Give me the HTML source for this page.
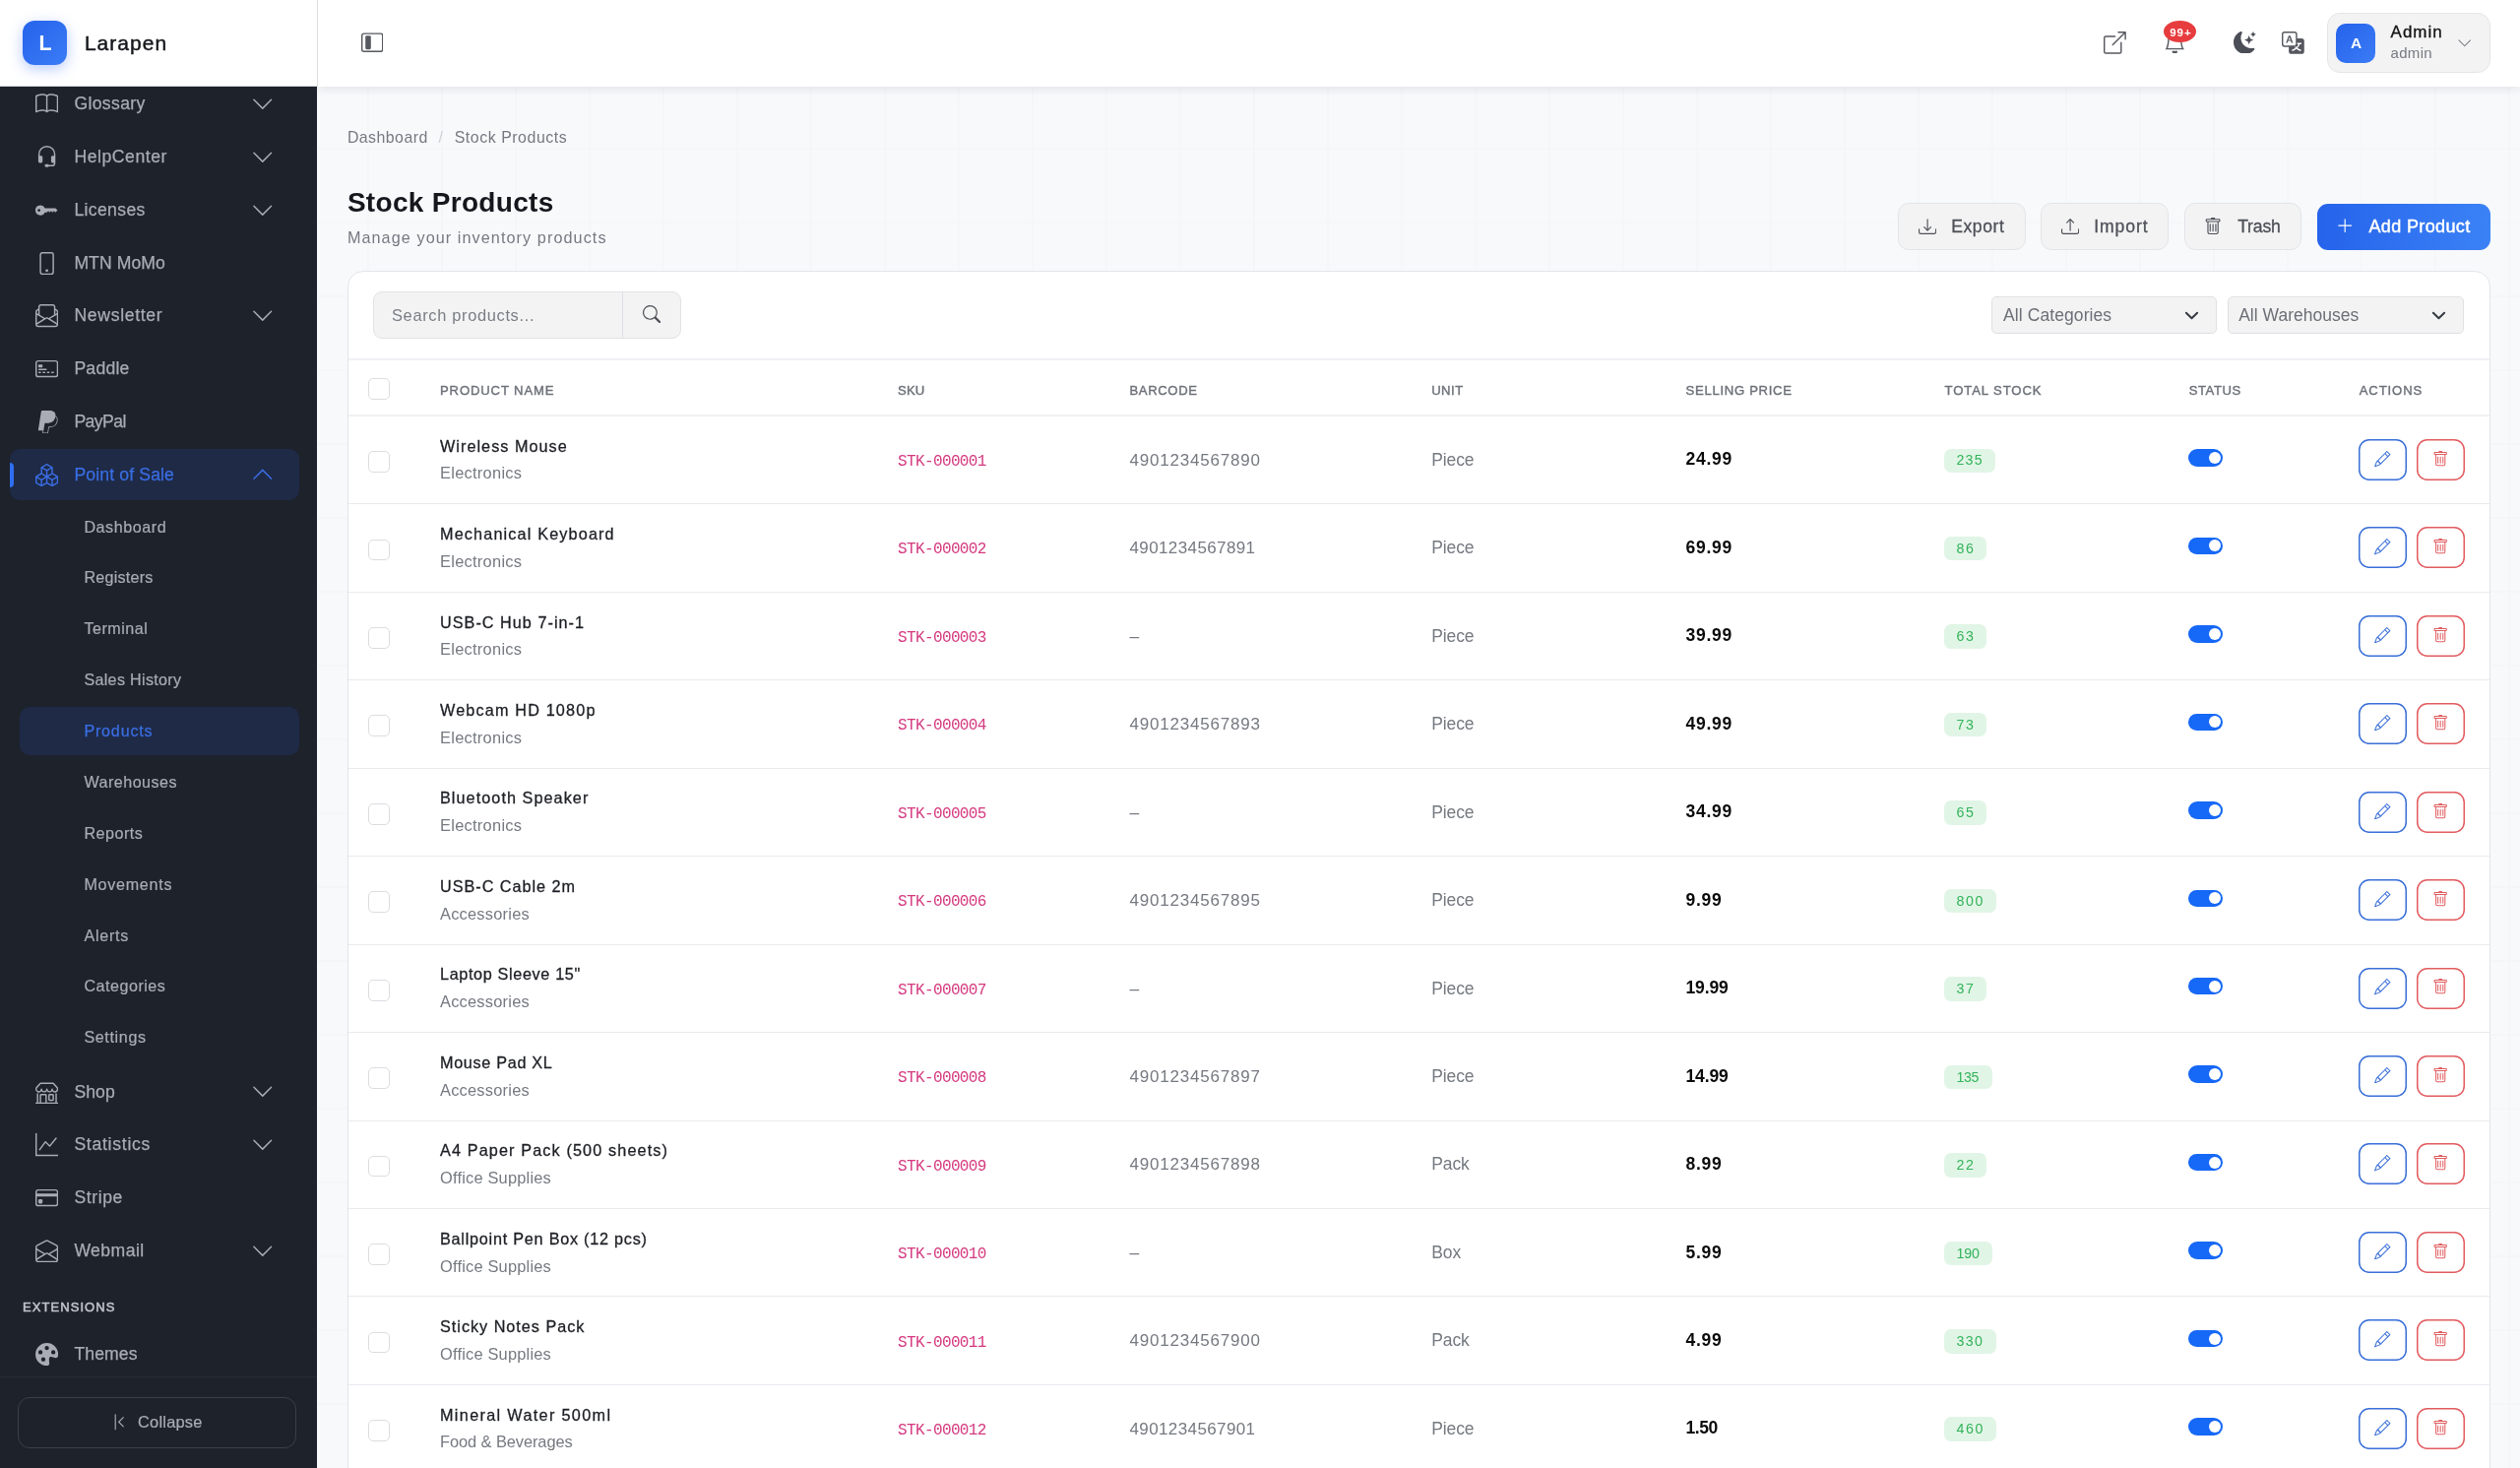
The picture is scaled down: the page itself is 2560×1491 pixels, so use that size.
<!DOCTYPE html>
<html lang="en"><head><meta charset="utf-8"><title>Stock Products</title><style>
html,body{margin:0;padding:0;}
body{width:2560px;height:1491px;overflow:hidden;position:relative;font-family:"Liberation Sans", sans-serif;
background-color:#f8f9fb;
background-image:linear-gradient(to right,#f5f6f8 2px,transparent 2px),linear-gradient(to bottom,#f5f6f8 2px,transparent 2px);
background-size:75px 75px;background-position:-2px 0px;}
#root{position:absolute;left:0;top:0;width:2560px;height:1491px;overflow:hidden;will-change:transform;}
.a{position:absolute;display:block;}
.t{position:absolute;white-space:pre;line-height:1;display:block;}
</style></head><body><div id="root">
<div class="a" style="left:322.00px;top:0.00px;width:2238.00px;height:88.00px;background:#fff;box-shadow:0 2px 10px rgba(20,30,50,.10);border-left:1px solid #dcdee2;box-sizing:border-box;"></div>
<div class="a" style="left:0.00px;top:88.00px;width:322.00px;height:1403.00px;background:#1e222b;"></div>
<div class="a" style="left:0.00px;top:0.00px;width:322.00px;height:88.00px;background:#fff;border-bottom:1px solid #d4d6da;box-sizing:border-box;"></div>
<div class="a" style="left:22.50px;top:20.50px;width:45.00px;height:45.00px;border-radius:12px;background:linear-gradient(135deg,#2563eb,#3b7cf6);box-shadow:0 4px 14px rgba(59,110,246,.35);"></div>
<span class="t" style="left:39.60px;top:34.10px;font-size:21.5px;color:#fff;font-weight:700;letter-spacing:0.000px;">L</span>
<span class="t" style="left:85.90px;top:33.10px;font-size:21px;color:#15171c;font-weight:400;letter-spacing:1.037px;-webkit-text-stroke:0.45px #15171c;">Larapen</span>
<svg class="a" style="left:35.80px;top:94.30px;width:23.2px;height:23.2px;fill:#a9acb4;" viewBox="0 0 16 16"><path d="M1 2.828c.885-.37 2.154-.769 3.388-.893 1.33-.134 2.458.063 3.112.752v9.746c-.935-.53-2.12-.603-3.213-.493-1.18.12-2.37.461-3.287.811V2.828zm7.5-.141c.654-.689 1.782-.886 3.112-.752 1.234.124 2.503.523 3.388.893v9.923c-.918-.35-2.107-.692-3.287-.81-1.094-.111-2.278-.039-3.213.492V2.687zM8 1.783C7.015.936 5.587.81 4.287.94c-1.514.153-3.042.672-3.994 1.105A.5.5 0 0 0 0 2.5v11a.5.5 0 0 0 .707.455c.882-.4 2.303-.881 3.68-1.02 1.409-.142 2.59.087 3.223.877a.5.5 0 0 0 .78 0c.633-.79 1.814-1.019 3.222-.877 1.378.139 2.8.62 3.681 1.02A.5.5 0 0 0 16 13.5v-11a.5.5 0 0 0-.293-.455c-.952-.433-2.48-.952-3.994-1.105C10.413.809 8.985.936 8 1.783z"/></svg>
<span class="t" style="left:75.40px;top:97.10px;font-size:17.6px;color:#a9acb4;font-weight:400;letter-spacing:0.368px;-webkit-text-stroke:0.25px #a9acb4;">Glossary</span>
<svg class="a" style="left:254.70px;top:94.15px;width:23.5px;height:23.5px;fill:#a9acb4;" viewBox="0 0 16 16"><path fill-rule="evenodd" d="M1.646 4.646a.5.5 0 0 1 .708 0L8 10.293l5.646-5.647a.5.5 0 0 1 .708.708l-6 6a.5.5 0 0 1-.708 0l-6-6a.5.5 0 0 1 0-.708z"/></svg>
<svg class="a" style="left:35.80px;top:148.06px;width:23.2px;height:23.2px;fill:#a9acb4;" viewBox="0 0 16 16"><path d="M8 1a5 5 0 0 0-5 5v1h1a1 1 0 0 1 1 1v3a1 1 0 0 1-1 1H3a1 1 0 0 1-1-1V6a6 6 0 1 1 12 0v6a2.5 2.5 0 0 1-2.5 2.5H9.366a1 1 0 0 1-.866.5h-1a1 1 0 1 1 0-2h1a1 1 0 0 1 .866.5H11.5A1.5 1.5 0 0 0 13 12h-1a1 1 0 0 1-1-1V8a1 1 0 0 1 1-1h1V6a5 5 0 0 0-5-5z"/></svg>
<span class="t" style="left:75.40px;top:151.10px;font-size:17.6px;color:#a9acb4;font-weight:400;letter-spacing:0.556px;-webkit-text-stroke:0.25px #a9acb4;">HelpCenter</span>
<svg class="a" style="left:254.70px;top:147.91px;width:23.5px;height:23.5px;fill:#a9acb4;" viewBox="0 0 16 16"><path fill-rule="evenodd" d="M1.646 4.646a.5.5 0 0 1 .708 0L8 10.293l5.646-5.647a.5.5 0 0 1 .708.708l-6 6a.5.5 0 0 1-.708 0l-6-6a.5.5 0 0 1 0-.708z"/></svg>
<svg class="a" style="left:35.80px;top:201.82px;width:23.2px;height:23.2px;fill:#a9acb4;" viewBox="0 0 16 16"><path d="M3.5 11.5a3.5 3.5 0 1 1 3.163-5H14L15.5 8 14 9.5l-1-1-1 1-1-1-1 1-1-1-1 1H6.663a3.5 3.5 0 0 1-3.163 2zM2.5 9a1 1 0 1 0 0-2 1 1 0 0 0 0 2z"/></svg>
<span class="t" style="left:75.40px;top:205.10px;font-size:17.6px;color:#a9acb4;font-weight:400;letter-spacing:0.364px;-webkit-text-stroke:0.25px #a9acb4;">Licenses</span>
<svg class="a" style="left:254.70px;top:201.67px;width:23.5px;height:23.5px;fill:#a9acb4;" viewBox="0 0 16 16"><path fill-rule="evenodd" d="M1.646 4.646a.5.5 0 0 1 .708 0L8 10.293l5.646-5.647a.5.5 0 0 1 .708.708l-6 6a.5.5 0 0 1-.708 0l-6-6a.5.5 0 0 1 0-.708z"/></svg>
<svg class="a" style="left:35.80px;top:255.58px;width:23.2px;height:23.2px;fill:#a9acb4;" viewBox="0 0 16 16"><path d="M11 1a1 1 0 0 1 1 1v12a1 1 0 0 1-1 1H5a1 1 0 0 1-1-1V2a1 1 0 0 1 1-1h6zM5 0a2 2 0 0 0-2 2v12a2 2 0 0 0 2 2h6a2 2 0 0 0 2-2V2a2 2 0 0 0-2-2H5z"/><path d="M8 14a1 1 0 1 0 0-2 1 1 0 0 0 0 2z"/></svg>
<span class="t" style="left:75.40px;top:259.10px;font-size:17.6px;color:#a9acb4;font-weight:400;letter-spacing:0.073px;-webkit-text-stroke:0.25px #a9acb4;">MTN MoMo</span>
<svg class="a" style="left:35.80px;top:309.34px;width:23.2px;height:23.2px;fill:#a9acb4;" viewBox="0 0 16 16"><path d="M4 0a2 2 0 0 0-2 2v1.133l-.941.502A2 2 0 0 0 0 5.4V14a2 2 0 0 0 2 2h12a2 2 0 0 0 2-2V5.4a2 2 0 0 0-1.059-1.765L14 3.133V2a2 2 0 0 0-2-2H4Zm10 4.267.47.25A1 1 0 0 1 15 5.4v.817l-1 .6v-2.55Zm-1 3.15-3.75 2.25L8 8.917l-1.25.75L3 7.417V2a1 1 0 0 1 1-1h8a1 1 0 0 1 1 1v5.417Zm-11-.6-1-.6V5.4a1 1 0 0 1 .53-.882L2 4.267v2.55Zm13 .566v5.734l-4.778-2.867L15 7.383Zm-.035 6.88A1 1 0 0 1 14 15H2a1 1 0 0 1-.965-.738L8 10.083l6.965 4.18ZM1 13.116V7.383l4.778 2.867L1 13.117Z"/></svg>
<span class="t" style="left:75.40px;top:312.10px;font-size:17.6px;color:#a9acb4;font-weight:400;letter-spacing:0.688px;-webkit-text-stroke:0.25px #a9acb4;">Newsletter</span>
<svg class="a" style="left:254.70px;top:309.19px;width:23.5px;height:23.5px;fill:#a9acb4;" viewBox="0 0 16 16"><path fill-rule="evenodd" d="M1.646 4.646a.5.5 0 0 1 .708 0L8 10.293l5.646-5.647a.5.5 0 0 1 .708.708l-6 6a.5.5 0 0 1-.708 0l-6-6a.5.5 0 0 1 0-.708z"/></svg>
<svg class="a" style="left:35.80px;top:363.10px;width:23.2px;height:23.2px;fill:#a9acb4;" viewBox="0 0 16 16"><path d="M14 3a1 1 0 0 1 1 1v8a1 1 0 0 1-1 1H2a1 1 0 0 1-1-1V4a1 1 0 0 1 1-1h12zM2 2a2 2 0 0 0-2 2v8a2 2 0 0 0 2 2h12a2 2 0 0 0 2-2V4a2 2 0 0 0-2-2H2z"/><path d="M2 5.5a.5.5 0 0 1 .5-.5h2a.5.5 0 0 1 .5.5v1a.5.5 0 0 1-.5.5h-2a.5.5 0 0 1-.5-.5v-1zm0 3a.5.5 0 0 1 .5-.5h5a.5.5 0 0 1 0 1h-5a.5.5 0 0 1-.5-.5zm0 2a.5.5 0 0 1 .5-.5h1a.5.5 0 0 1 0 1h-1a.5.5 0 0 1-.5-.5zm3 0a.5.5 0 0 1 .5-.5h1a.5.5 0 0 1 0 1h-1a.5.5 0 0 1-.5-.5zm3 0a.5.5 0 0 1 .5-.5h1a.5.5 0 0 1 0 1h-1a.5.5 0 0 1-.5-.5zm3 0a.5.5 0 0 1 .5-.5h1a.5.5 0 0 1 0 1h-1a.5.5 0 0 1-.5-.5z"/></svg>
<span class="t" style="left:75.40px;top:366.10px;font-size:17.6px;color:#a9acb4;font-weight:400;letter-spacing:0.241px;-webkit-text-stroke:0.25px #a9acb4;">Paddle</span>
<svg class="a" style="left:35.80px;top:416.86px;width:23.2px;height:23.2px;fill:#a9acb4;" viewBox="0 0 16 16"><path d="M14.06 3.713c.12-1.071-.093-1.832-.702-2.526C12.628.356 11.312 0 9.626 0H4.734a.7.7 0 0 0-.691.59L2.005 13.509a.42.42 0 0 0 .415.486h2.756l-.202 1.28a.628.628 0 0 0 .62.726H8.14c.429 0 .793-.31.862-.731l.025-.13.48-3.043.03-.164.001-.007a.351.351 0 0 1 .348-.297h.38c1.266 0 2.425-.256 3.345-.91.379-.27.712-.603.993-1.005a4.942 4.942 0 0 0 .88-2.195c.242-1.246.13-2.356-.57-3.154a2.687 2.687 0 0 0-.76-.59l-.094-.061ZM6.543 8.82a.695.695 0 0 1 .321-.079H8.3c2.82 0 5.027-1.144 5.672-4.456l.003-.016c.217.124.4.27.548.438.546.623.679 1.535.45 2.71-.272 1.397-.866 2.307-1.663 2.874-.802.57-1.842.815-3.043.815h-.38a.873.873 0 0 0-.863.734l-.03.164-.48 3.043-.024.13-.001.004a.352.352 0 0 1-.348.296H5.595a.106.106 0 0 1-.105-.123l.208-1.32.845-5.214Z"/></svg>
<span class="t" style="left:75.40px;top:420.10px;font-size:17.6px;color:#a9acb4;font-weight:400;letter-spacing:-0.550px;-webkit-text-stroke:0.25px #a9acb4;">PayPal</span>
<div class="a" style="left:10.20px;top:456.40px;width:293.60px;height:51.70px;background:#1e2a46;border-radius:10px;"></div>
<div class="a" style="left:10.20px;top:469.50px;width:4.00px;height:25.50px;background:#2f6df2;border-radius:0 4px 4px 0;"></div>
<svg class="a" style="left:35.80px;top:470.62px;width:23.2px;height:23.2px;fill:#3a6de2;" viewBox="0 0 16 16"><path d="M7.752.066a.5.5 0 0 1 .496 0l3.75 2.143a.5.5 0 0 1 .252.434v3.995l3.498 2A.5.5 0 0 1 16 9.07v4.286a.5.5 0 0 1-.252.434l-3.75 2.143a.5.5 0 0 1-.496 0l-3.502-2-3.502 2.001a.5.5 0 0 1-.496 0l-3.75-2.143A.5.5 0 0 1 0 13.357V9.071a.5.5 0 0 1 .252-.434L3.75 6.638V2.643a.5.5 0 0 1 .252-.434L7.752.066ZM4.25 7.504 1.508 9.071l2.742 1.567 2.742-1.567L4.25 7.504ZM7.5 9.933l-2.75 1.571v3.134l2.75-1.571V9.933Zm1 3.134 2.75 1.571v-3.134L8.5 9.933v3.134Zm.508-3.996 2.742 1.567 2.742-1.567-2.742-1.567-2.742 1.567Zm2.242-2.433V3.504L8.5 5.076V8.21l2.75-1.572ZM7.5 8.21V5.076L4.75 3.504v3.134L7.5 8.21ZM5.258 2.643 8 4.21l2.742-1.567L8 1.076 5.258 2.643ZM15 9.933l-2.75 1.571v3.134L15 13.067V9.933ZM3.75 14.638v-3.134L1 9.933v3.134l2.75 1.571Z"/></svg>
<span class="t" style="left:75.40px;top:474.10px;font-size:17.6px;color:#3a6de2;font-weight:400;letter-spacing:0.145px;-webkit-text-stroke:0.25px #3a6de2;">Point of Sale</span>
<svg class="a" style="left:254.70px;top:470.47px;width:23.5px;height:23.5px;fill:#3a6de2;" viewBox="0 0 16 16"><path fill-rule="evenodd" d="M7.646 4.646a.5.5 0 0 1 .708 0l6 6a.5.5 0 0 1-.708.708L8 5.707l-5.646 5.647a.5.5 0 0 1-.708-.708l6-6z"/></svg>
<span class="t" style="left:85.40px;top:527.10px;font-size:16.1px;color:#a9acb4;font-weight:400;letter-spacing:0.558px;-webkit-text-stroke:0.2px #a9acb4;">Dashboard</span>
<span class="t" style="left:85.40px;top:578.10px;font-size:16.1px;color:#a9acb4;font-weight:400;letter-spacing:0.252px;-webkit-text-stroke:0.2px #a9acb4;">Registers</span>
<span class="t" style="left:85.40px;top:630.10px;font-size:16.1px;color:#a9acb4;font-weight:400;letter-spacing:0.510px;-webkit-text-stroke:0.2px #a9acb4;">Terminal</span>
<span class="t" style="left:85.40px;top:682.10px;font-size:16.1px;color:#a9acb4;font-weight:400;letter-spacing:0.324px;-webkit-text-stroke:0.2px #a9acb4;">Sales History</span>
<div class="a" style="left:20.30px;top:717.78px;width:283.50px;height:49.00px;background:#1e2a46;border-radius:10px;"></div>
<span class="t" style="left:85.40px;top:734.10px;font-size:16.1px;color:#3a6de2;font-weight:400;letter-spacing:0.812px;-webkit-text-stroke:0.25px #3a6de2;">Products</span>
<span class="t" style="left:85.40px;top:786.10px;font-size:16.1px;color:#a9acb4;font-weight:400;letter-spacing:0.494px;-webkit-text-stroke:0.2px #a9acb4;">Warehouses</span>
<span class="t" style="left:85.40px;top:838.10px;font-size:16.1px;color:#a9acb4;font-weight:400;letter-spacing:0.507px;-webkit-text-stroke:0.2px #a9acb4;">Reports</span>
<span class="t" style="left:85.40px;top:890.10px;font-size:16.1px;color:#a9acb4;font-weight:400;letter-spacing:0.739px;-webkit-text-stroke:0.2px #a9acb4;">Movements</span>
<span class="t" style="left:85.40px;top:942.10px;font-size:16.1px;color:#a9acb4;font-weight:400;letter-spacing:0.772px;-webkit-text-stroke:0.2px #a9acb4;">Alerts</span>
<span class="t" style="left:85.40px;top:993.10px;font-size:16.1px;color:#a9acb4;font-weight:400;letter-spacing:0.517px;-webkit-text-stroke:0.2px #a9acb4;">Categories</span>
<span class="t" style="left:85.40px;top:1045.10px;font-size:16.1px;color:#a9acb4;font-weight:400;letter-spacing:0.649px;-webkit-text-stroke:0.2px #a9acb4;">Settings</span>
<svg class="a" style="left:35.80px;top:1097.60px;width:23.2px;height:23.2px;fill:#a9acb4;" viewBox="0 0 16 16"><path d="M2.97 1.35A1 1 0 0 1 3.73 1h8.54a1 1 0 0 1 .76.35l2.609 3.044A1.5 1.5 0 0 1 16 5.37v.255a2.375 2.375 0 0 1-4.25 1.458A2.371 2.371 0 0 1 9.875 8 2.37 2.37 0 0 1 8 7.083 2.37 2.37 0 0 1 6.125 8a2.37 2.37 0 0 1-1.875-.917A2.375 2.375 0 0 1 0 5.625V5.37a1.5 1.5 0 0 1 .361-.976l2.61-3.045zm1.78 4.275a1.375 1.375 0 0 0 2.75 0 .5.5 0 0 1 1 0 1.375 1.375 0 0 0 2.75 0 .5.5 0 0 1 1 0 1.375 1.375 0 1 0 2.75 0V5.37a.5.5 0 0 0-.12-.325L12.27 2H3.73L1.12 5.045A.5.5 0 0 0 1 5.37v.255a1.375 1.375 0 0 0 2.75 0 .5.5 0 0 1 1 0zM1.5 8.5A.5.5 0 0 1 2 9v6h1v-5a1 1 0 0 1 1-1h3a1 1 0 0 1 1 1v5h6V9a.5.5 0 0 1 1 0v6h.5a.5.5 0 0 1 0 1H.5a.5.5 0 0 1 0-1H1V9a.5.5 0 0 1 .5-.5zM4 15h3v-5H4v5zm5-5a1 1 0 0 1 1-1h2a1 1 0 0 1 1 1v3a1 1 0 0 1-1 1h-2a1 1 0 0 1-1-1v-3zm3 0h-2v3h2v-3z"/></svg>
<span class="t" style="left:75.40px;top:1101.10px;font-size:17.6px;color:#a9acb4;font-weight:400;letter-spacing:0.102px;-webkit-text-stroke:0.25px #a9acb4;">Shop</span>
<svg class="a" style="left:254.70px;top:1097.45px;width:23.5px;height:23.5px;fill:#a9acb4;" viewBox="0 0 16 16"><path fill-rule="evenodd" d="M1.646 4.646a.5.5 0 0 1 .708 0L8 10.293l5.646-5.647a.5.5 0 0 1 .708.708l-6 6a.5.5 0 0 1-.708 0l-6-6a.5.5 0 0 1 0-.708z"/></svg>
<svg class="a" style="left:35.80px;top:1151.38px;width:23.2px;height:23.2px;fill:#a9acb4;" viewBox="0 0 16 16"><path fill-rule="evenodd" d="M0 0h1v15h15v1H0V0Zm14.817 3.113a.5.5 0 0 1 .07.704l-4.5 5.5a.5.5 0 0 1-.74.037L7.06 6.767l-3.656 5.027a.5.5 0 0 1-.808-.588l4-5.5a.5.5 0 0 1 .758-.06l2.609 2.61 4.15-5.073a.5.5 0 0 1 .704-.07Z"/></svg>
<span class="t" style="left:75.40px;top:1154.10px;font-size:17.6px;color:#a9acb4;font-weight:400;letter-spacing:0.733px;-webkit-text-stroke:0.25px #a9acb4;">Statistics</span>
<svg class="a" style="left:254.70px;top:1151.23px;width:23.5px;height:23.5px;fill:#a9acb4;" viewBox="0 0 16 16"><path fill-rule="evenodd" d="M1.646 4.646a.5.5 0 0 1 .708 0L8 10.293l5.646-5.647a.5.5 0 0 1 .708.708l-6 6a.5.5 0 0 1-.708 0l-6-6a.5.5 0 0 1 0-.708z"/></svg>
<svg class="a" style="left:35.80px;top:1205.16px;width:23.2px;height:23.2px;fill:#a9acb4;" viewBox="0 0 16 16"><path d="M0 4a2 2 0 0 1 2-2h12a2 2 0 0 1 2 2v8a2 2 0 0 1-2 2H2a2 2 0 0 1-2-2V4zm2-1a1 1 0 0 0-1 1v1h14V4a1 1 0 0 0-1-1H2zm13 4H1v5a1 1 0 0 0 1 1h12a1 1 0 0 0 1-1V7z"/><path d="M2 10a1 1 0 0 1 1-1h1a1 1 0 0 1 1 1v1a1 1 0 0 1-1 1H3a1 1 0 0 1-1-1v-1z"/></svg>
<span class="t" style="left:75.40px;top:1208.10px;font-size:17.6px;color:#a9acb4;font-weight:400;letter-spacing:0.606px;-webkit-text-stroke:0.25px #a9acb4;">Stripe</span>
<svg class="a" style="left:35.80px;top:1258.94px;width:23.2px;height:23.2px;fill:#a9acb4;" viewBox="0 0 16 16"><path d="M8.47 1.318a1 1 0 0 0-.94 0l-6 3.2A1 1 0 0 0 1 5.4v.817l5.75 3.45L8 8.917l1.25.75L15 6.217V5.4a1 1 0 0 0-.53-.882l-6-3.2ZM15 7.383l-4.778 2.867L15 13.117V7.383Zm-.035 6.88L8 10.082l-6.965 4.18A1 1 0 0 0 2 15h12a1 1 0 0 0 .965-.738ZM1 13.116l4.778-2.867L1 7.383v5.734ZM7.059.435a2 2 0 0 1 1.882 0l6 3.2A2 2 0 0 1 16 5.4V14a2 2 0 0 1-2 2H2a2 2 0 0 1-2-2V5.4a2 2 0 0 1 1.059-1.765l6-3.2Z"/></svg>
<span class="t" style="left:75.40px;top:1262.10px;font-size:17.6px;color:#a9acb4;font-weight:400;letter-spacing:0.446px;-webkit-text-stroke:0.25px #a9acb4;">Webmail</span>
<svg class="a" style="left:254.70px;top:1258.79px;width:23.5px;height:23.5px;fill:#a9acb4;" viewBox="0 0 16 16"><path fill-rule="evenodd" d="M1.646 4.646a.5.5 0 0 1 .708 0L8 10.293l5.646-5.647a.5.5 0 0 1 .708.708l-6 6a.5.5 0 0 1-.708 0l-6-6a.5.5 0 0 1 0-.708z"/></svg>
<span class="t" style="left:23.00px;top:1321.10px;font-size:13px;color:#c3c5cb;font-weight:400;letter-spacing:1.067px;-webkit-text-stroke:0.5px #c3c5cb;">EXTENSIONS</span>
<svg class="a" style="left:35.80px;top:1363.70px;width:23.2px;height:23.2px;fill:#a9acb4;" viewBox="0 0 16 16"><path d="M12.433 10.07C14.133 10.585 16 11.15 16 8a8 8 0 1 0-8 8c1.996 0 1.826-1.504 1.649-3.08-.124-1.101-.252-2.237.351-2.92.465-.527 1.42-.237 2.433.07zM8 5a1.5 1.5 0 1 1 0-3 1.5 1.5 0 0 1 0 3zm4.5 3a1.5 1.5 0 1 1 0-3 1.5 1.5 0 0 1 0 3zM5 6.5a1.5 1.5 0 1 1-3 0 1.5 1.5 0 0 1 3 0zm.5 6.5a1.5 1.5 0 1 1 0-3 1.5 1.5 0 0 1 0 3z"/></svg>
<span class="t" style="left:75.40px;top:1367.10px;font-size:17.6px;color:#a9acb4;font-weight:400;letter-spacing:0.128px;-webkit-text-stroke:0.25px #a9acb4;">Themes</span>
<div class="a" style="left:0.00px;top:1398.00px;width:322.00px;height:1.00px;background:#262b35;"></div>
<div class="a" style="left:17.80px;top:1419.00px;width:283.40px;height:51.70px;border:1px solid #3a3f4b;border-radius:12px;box-sizing:border-box;"></div>
<svg class="a" style="left:112.00px;top:1435.20px;width:18.5px;height:18.5px;fill:#a9acb4;" viewBox="0 0 16 16"><path fill-rule="evenodd" d="M11.854 3.646a.5.5 0 0 1 0 .708L8.207 8l3.647 3.646a.5.5 0 0 1-.708.708l-4-4a.5.5 0 0 1 0-.708l4-4a.5.5 0 0 1 .708 0zM4.5 1a.5.5 0 0 0-.5.5v13a.5.5 0 0 0 1 0v-13a.5.5 0 0 0-.5-.5z"/></svg>
<span class="t" style="left:140.00px;top:1436.10px;font-size:16.4px;color:#a9acb4;font-weight:400;letter-spacing:0.231px;-webkit-text-stroke:0.2px #a9acb4;">Collapse</span>
<svg class="a" style="left:366.90px;top:31.60px;width:22.4px;height:22.4px;fill:#55585e;" viewBox="0 0 16 16"><path d="M14 2a1 1 0 0 1 1 1v10a1 1 0 0 1-1 1H2a1 1 0 0 1-1-1V3a1 1 0 0 1 1-1h12zM2 1a2 2 0 0 0-2 2v10a2 2 0 0 0 2 2h12a2 2 0 0 0 2-2V3a2 2 0 0 0-2-2H2z"/><path d="M3 4a1 1 0 0 1 1-1h2a1 1 0 0 1 1 1v8a1 1 0 0 1-1 1H4a1 1 0 0 1-1-1V4z"/></svg>
<svg class="a" style="left:2137.40px;top:31.90px;width:22.8px;height:22.8px;fill:#55585e;" viewBox="0 0 16 16"><path fill-rule="evenodd" d="M8.636 3.5a.5.5 0 0 0-.5-.5H1.5A1.5 1.5 0 0 0 0 4.5v10A1.5 1.5 0 0 0 1.5 16h10a1.5 1.5 0 0 0 1.5-1.5V7.864a.5.5 0 0 0-1 0V14.5a.5.5 0 0 1-.5.5h-10a.5.5 0 0 1-.5-.5v-10a.5.5 0 0 1 .5-.5h6.636a.5.5 0 0 0 .5-.5z"/><path fill-rule="evenodd" d="M16 .5a.5.5 0 0 0-.5-.5h-5a.5.5 0 0 0 0 1h3.793L6.146 9.146a.5.5 0 1 0 .708.708L15 1.707V5.5a.5.5 0 0 0 1 0v-5z"/></svg>
<svg class="a" style="left:2197.60px;top:31.90px;width:22.6px;height:22.6px;fill:#55585e;" viewBox="0 0 16 16"><path d="M8 16a2 2 0 0 0 2-2H6a2 2 0 0 0 2 2zM8 1.918l-.797.161A4.002 4.002 0 0 0 4 6c0 .628-.134 2.197-.459 3.742-.16.767-.376 1.566-.663 2.258h10.244c-.287-.692-.502-1.49-.663-2.258C12.134 8.197 12 6.628 12 6a4.002 4.002 0 0 0-3.203-3.92L8 1.917zM14.22 12c.223.447.481.801.78 1H1c.299-.199.557-.553.78-1C2.68 10.2 3 6.88 3 6c0-2.42 1.72-4.44 4.005-4.901a1 1 0 1 1 1.99 0A5.002 5.002 0 0 1 13 6c0 .88.32 4.2 1.22 6z"/></svg>
<div class="a" style="left:2198.20px;top:21.00px;width:33.20px;height:22.40px;background:#e73c3e;border-radius:50%;"></div>
<span class="t" style="left:2204.20px;top:28.10px;font-size:11.5px;color:#fff;font-weight:700;letter-spacing:0.992px;">99+</span>
<svg class="a" style="left:2268.90px;top:31.60px;width:22.8px;height:22.8px;fill:#4b4e57;" viewBox="0 0 16 16"><path d="M6 .278a.768.768 0 0 1 .08.858 7.208 7.208 0 0 0-.878 3.46c0 4.021 3.278 7.277 7.318 7.277.527 0 1.04-.055 1.533-.16a.787.787 0 0 1 .81.316.733.733 0 0 1-.031.893A8.349 8.349 0 0 1 8.344 16C3.734 16 0 12.286 0 7.71 0 4.266 2.114 1.312 5.124.06A.752.752 0 0 1 6 .278z"/><path d="M10.794 3.148a.217.217 0 0 1 .412 0l.387 1.162c.173.518.579.924 1.097 1.097l1.162.387a.217.217 0 0 1 0 .412l-1.162.387a1.734 1.734 0 0 0-1.097 1.097l-.387 1.162a.217.217 0 0 1-.412 0l-.387-1.162A1.734 1.734 0 0 0 9.31 6.593l-1.162-.387a.217.217 0 0 1 0-.412l1.162-.387a1.734 1.734 0 0 0 1.097-1.097l.387-1.162zM13.863.099a.145.145 0 0 1 .274 0l.258.774c.115.346.386.617.732.732l.774.258a.145.145 0 0 1 0 .274l-.774.258a1.156 1.156 0 0 0-.732.732l-.258.774a.145.145 0 0 1-.274 0l-.258-.774a1.156 1.156 0 0 0-.732-.732l-.774-.258a.145.145 0 0 1 0-.274l.774-.258c.346-.115.617-.386.732-.732L13.863.1z"/></svg>
<svg class="a" style="left:2317.80px;top:31.80px;width:22.8px;height:22.8px;fill:#55585e;" viewBox="0 0 16 16"><path d="M4.545 6.714 4.11 8H3l1.862-5h1.284L8 8H6.833l-.435-1.286H4.545zm1.634-.736L5.5 3.956h-.049l-.679 2.022H6.18z"/><path d="M0 2a2 2 0 0 1 2-2h7a2 2 0 0 1 2 2v3h3a2 2 0 0 1 2 2v7a2 2 0 0 1-2 2H7a2 2 0 0 1-2-2v-3H2a2 2 0 0 1-2-2V2zm2-1a1 1 0 0 0-1 1v7a1 1 0 0 0 1 1h7a1 1 0 0 0 1-1V2a1 1 0 0 0-1-1H2zm7.138 9.995c.193.301.402.583.63.846-.748.575-1.673 1.001-2.768 1.292.178.217.451.635.555.867 1.125-.359 2.08-.844 2.886-1.494.777.665 1.739 1.165 2.93 1.472.133-.254.414-.673.629-.89-1.125-.253-2.057-.694-2.82-1.284.681-.747 1.222-1.651 1.621-2.757H14V8h-3v1.047h.765c-.318.844-.74 1.546-1.272 2.13a6.066 6.066 0 0 1-.415-.492 1.988 1.988 0 0 1-.94.31z"/></svg>
<div class="a" style="left:2364.10px;top:13.10px;width:166.20px;height:60.80px;background:#f3f3f4;border:1px solid #e4e5e7;border-radius:13px;box-sizing:border-box;"></div>
<div class="a" style="left:2372.90px;top:23.70px;width:40.20px;height:40.20px;background:linear-gradient(135deg,#2563eb,#3b7cf6);border-radius:10px;"></div>
<span class="t" style="left:2388.00px;top:36.10px;font-size:15.5px;color:#fff;font-weight:700;letter-spacing:0.000px;">A</span>
<span class="t" style="left:2428.60px;top:24.10px;font-size:17px;color:#111;font-weight:400;letter-spacing:0.953px;-webkit-text-stroke:0.3px #111;">Admin</span>
<span class="t" style="left:2428.60px;top:46.10px;font-size:15px;color:#777a80;font-weight:400;letter-spacing:0.285px;">admin</span>
<svg class="a" style="left:2496.20px;top:35.60px;width:15.5px;height:15.5px;fill:#777a80;" viewBox="0 0 16 16"><path fill-rule="evenodd" d="M1.646 4.646a.5.5 0 0 1 .708 0L8 10.293l5.646-5.647a.5.5 0 0 1 .708.708l-6 6a.5.5 0 0 1-.708 0l-6-6a.5.5 0 0 1 0-.708z"/></svg>
<span class="t" style="left:352.90px;top:132.10px;font-size:15.9px;color:#757980;font-weight:400;letter-spacing:0.456px;">Dashboard</span>
<span class="t" style="left:445.50px;top:132.10px;font-size:15.9px;color:#cfd1d6;font-weight:400;letter-spacing:0.000px;">/</span>
<span class="t" style="left:461.70px;top:132.10px;font-size:15.9px;color:#757980;font-weight:400;letter-spacing:0.548px;">Stock Products</span>
<span class="t" style="left:352.90px;top:192.10px;font-size:28px;color:#15171c;font-weight:700;letter-spacing:0.308px;">Stock Products</span>
<span class="t" style="left:352.90px;top:233.10px;font-size:16.2px;color:#757980;font-weight:400;letter-spacing:1.081px;">Manage your inventory products</span>
<div class="a" style="left:1928.00px;top:205.80px;width:129.50px;height:48.50px;background:#f3f3f4;border:1px solid #e3e4e7;border-radius:11px;box-sizing:border-box;"></div>
<svg class="a" style="left:1949.20px;top:221.00px;width:18.2px;height:18.2px;fill:#4d5057;" viewBox="0 0 16 16"><path d="M.5 9.9a.5.5 0 0 1 .5.5v2.5a1 1 0 0 0 1 1h12a1 1 0 0 0 1-1v-2.5a.5.5 0 0 1 1 0v2.5a2 2 0 0 1-2 2H2a2 2 0 0 1-2-2v-2.5a.5.5 0 0 1 .5-.5z"/><path d="M7.646 11.854a.5.5 0 0 0 .708 0l3-3a.5.5 0 0 0-.708-.708L8.5 10.293V1.5a.5.5 0 0 0-1 0v8.793L5.354 8.146a.5.5 0 1 0-.708.708l3 3z"/></svg>
<span class="t" style="left:1982.20px;top:222.10px;font-size:17.6px;color:#4d5057;font-weight:400;letter-spacing:0.568px;-webkit-text-stroke:0.3px #4d5057;">Export</span>
<div class="a" style="left:2073.00px;top:205.80px;width:129.80px;height:48.50px;background:#f3f3f4;border:1px solid #e3e4e7;border-radius:11px;box-sizing:border-box;"></div>
<svg class="a" style="left:2093.60px;top:221.00px;width:18.2px;height:18.2px;fill:#4d5057;" viewBox="0 0 16 16"><path d="M.5 9.9a.5.5 0 0 1 .5.5v2.5a1 1 0 0 0 1 1h12a1 1 0 0 0 1-1v-2.5a.5.5 0 0 1 1 0v2.5a2 2 0 0 1-2 2H2a2 2 0 0 1-2-2v-2.5a.5.5 0 0 1 .5-.5z"/><path d="M7.646 1.146a.5.5 0 0 1 .708 0l3 3a.5.5 0 0 1-.708.708L8.5 2.707V11.5a.5.5 0 0 1-1 0V2.707L5.354 4.854a.5.5 0 1 1-.708-.708l3-3z"/></svg>
<span class="t" style="left:2127.20px;top:222.10px;font-size:17.6px;color:#4d5057;font-weight:400;letter-spacing:0.905px;-webkit-text-stroke:0.3px #4d5057;">Import</span>
<div class="a" style="left:2218.70px;top:205.80px;width:119.50px;height:48.50px;background:#f3f3f4;border:1px solid #e3e4e7;border-radius:11px;box-sizing:border-box;"></div>
<svg class="a" style="left:2239.20px;top:221.00px;width:18.2px;height:18.2px;fill:#4d5057;" viewBox="0 0 16 16"><path d="M5.5 5.5A.5.5 0 0 1 6 6v6a.5.5 0 0 1-1 0V6a.5.5 0 0 1 .5-.5Zm2.5 0a.5.5 0 0 1 .5.5v6a.5.5 0 0 1-1 0V6a.5.5 0 0 1 .5-.5Zm3 .5a.5.5 0 0 0-1 0v6a.5.5 0 0 0 1 0V6Z"/><path d="M14.5 3a1 1 0 0 1-1 1H13v9a2 2 0 0 1-2 2H5a2 2 0 0 1-2-2V4h-.5a1 1 0 0 1-1-1V2a1 1 0 0 1 1-1H6a1 1 0 0 1 1-1h2a1 1 0 0 1 1 1h3.5a1 1 0 0 1 1 1v1ZM4.118 4 4 4.059V13a1 1 0 0 0 1 1h6a1 1 0 0 0 1-1V4.059L11.882 4H4.118ZM2.5 3h11V2h-11v1Z"/></svg>
<span class="t" style="left:2273.20px;top:222.10px;font-size:17.6px;color:#4d5057;font-weight:400;letter-spacing:-0.182px;-webkit-text-stroke:0.3px #4d5057;">Trash</span>
<div class="a" style="left:2353.60px;top:206.50px;width:176.20px;height:47.00px;background:linear-gradient(90deg,#2563eb,#3b82f6);border-radius:11px;"></div>
<svg class="a" style="left:2373.20px;top:220.30px;width:18.4px;height:18.4px;fill:#fff;" viewBox="0 0 16 16"><path fill-rule="evenodd" d="M8 2a.5.5 0 0 1 .5.5v5h5a.5.5 0 0 1 0 1h-5v5a.5.5 0 0 1-1 0v-5h-5a.5.5 0 0 1 0-1h5v-5A.5.5 0 0 1 8 2Z"/></svg>
<span class="t" style="left:2406.50px;top:221.10px;font-size:18px;color:#fff;font-weight:400;letter-spacing:0.364px;-webkit-text-stroke:0.45px #fff;">Add Product</span>
<div class="a" style="left:353.00px;top:275.00px;width:2177.00px;height:1300.00px;background:#fff;border:1px solid #e3e5e9;border-radius:16px;box-sizing:border-box;"></div>
<div class="a" style="left:379.30px;top:296.25px;width:312.50px;height:48.00px;background:#f3f3f4;border:1px solid #e2e3e6;border-radius:9px;box-sizing:border-box;"></div>
<div class="a" style="left:632.00px;top:297.00px;width:1.00px;height:46.50px;background:#dfe0e3;"></div>
<span class="t" style="left:398.00px;top:312.10px;font-size:16.4px;color:#7a7d84;font-weight:400;letter-spacing:0.676px;">Search products...</span>
<svg class="a" style="left:653.00px;top:310.30px;width:18.2px;height:18.2px;fill:#4d5057;" viewBox="0 0 16 16"><path d="M11.742 10.344a6.5 6.5 0 1 0-1.397 1.398h-.001c.03.04.062.078.098.115l3.85 3.85a1 1 0 0 0 1.415-1.414l-3.85-3.85a1.007 1.007 0 0 0-.115-.1zM12 6.5a5.5 5.5 0 1 1-11 0 5.5 5.5 0 0 1 11 0z"/></svg>
<div class="a" style="left:2022.70px;top:301.20px;width:229.10px;height:38.00px;background:#f3f3f4;border:1px solid #e0e1e4;border-radius:5px;box-sizing:border-box;"></div>
<span class="t" style="left:2035.10px;top:312.10px;font-size:17.5px;color:#6c6f76;font-weight:400;letter-spacing:0.081px;">All Categories</span>
<svg class="a" style="left:2218.50px;top:313px;width:15px;height:15px" viewBox="0 0 16 16"><path fill="none" stroke="#343a40" stroke-linecap="round" stroke-linejoin="round" stroke-width="2.1" d="m2 5 6 6 6-6"/></svg>
<div class="a" style="left:2262.60px;top:301.20px;width:240.60px;height:38.00px;background:#f3f3f4;border:1px solid #e0e1e4;border-radius:5px;box-sizing:border-box;"></div>
<span class="t" style="left:2274.20px;top:312.10px;font-size:17.5px;color:#6c6f76;font-weight:400;letter-spacing:0.007px;">All Warehouses</span>
<svg class="a" style="left:2470.20px;top:313px;width:15px;height:15px" viewBox="0 0 16 16"><path fill="none" stroke="#343a40" stroke-linecap="round" stroke-linejoin="round" stroke-width="2.1" d="m2 5 6 6 6-6"/></svg>
<div class="a" style="left:354.00px;top:364.00px;width:2175.00px;height:2.00px;background:#f0f1f3;"></div>
<div class="a" style="left:374.40px;top:384.20px;width:22.10px;height:21.80px;background:#fff;border:1.5px solid #dcdde1;border-radius:5px;box-sizing:border-box;"></div>
<span class="t" style="left:447.00px;top:390.10px;font-size:13.1px;color:#6d7179;font-weight:400;letter-spacing:0.865px;-webkit-text-stroke:0.4px #6d7179;">PRODUCT NAME</span>
<span class="t" style="left:912.00px;top:390.10px;font-size:13.1px;color:#6d7179;font-weight:400;letter-spacing:0.156px;-webkit-text-stroke:0.4px #6d7179;">SKU</span>
<span class="t" style="left:1147.50px;top:390.10px;font-size:13.1px;color:#6d7179;font-weight:400;letter-spacing:0.622px;-webkit-text-stroke:0.4px #6d7179;">BARCODE</span>
<span class="t" style="left:1454.20px;top:390.10px;font-size:13.1px;color:#6d7179;font-weight:400;letter-spacing:0.479px;-webkit-text-stroke:0.4px #6d7179;">UNIT</span>
<span class="t" style="left:1712.50px;top:390.10px;font-size:13.1px;color:#6d7179;font-weight:400;letter-spacing:0.711px;-webkit-text-stroke:0.4px #6d7179;">SELLING PRICE</span>
<span class="t" style="left:1975.50px;top:390.10px;font-size:13.1px;color:#6d7179;font-weight:400;letter-spacing:0.898px;-webkit-text-stroke:0.4px #6d7179;">TOTAL STOCK</span>
<span class="t" style="left:2223.70px;top:390.10px;font-size:13.1px;color:#6d7179;font-weight:400;letter-spacing:0.556px;-webkit-text-stroke:0.4px #6d7179;">STATUS</span>
<span class="t" style="left:2396.70px;top:390.10px;font-size:13.1px;color:#6d7179;font-weight:400;letter-spacing:0.899px;-webkit-text-stroke:0.4px #6d7179;">ACTIONS</span>
<div class="a" style="left:354.00px;top:421.00px;width:2175.00px;height:2.00px;background:#f0f1f3;"></div>
<div class="a" style="left:374.40px;top:458.10px;width:22.10px;height:21.80px;background:#fff;border:1.5px solid #dcdde1;border-radius:5px;box-sizing:border-box;"></div>
<span class="t" style="left:447.00px;top:445.10px;font-size:16.2px;color:#1d1f24;font-weight:400;letter-spacing:1.047px;-webkit-text-stroke:0.3px #1d1f24;">Wireless Mouse</span>
<span class="t" style="left:447.00px;top:472.10px;font-size:16.4px;color:#757980;font-weight:400;letter-spacing:0.283px;">Electronics</span>
<span class="t" style="left:912.00px;top:461.10px;font-size:16px;color:#d4397f;font-weight:400;letter-spacing:-0.620px;font-family:'Liberation Mono', monospace;">STK-000001</span>
<span class="t" style="left:1147.50px;top:459.10px;font-size:17px;color:#757980;font-weight:400;letter-spacing:0.802px;">4901234567890</span>
<span class="t" style="left:1454.20px;top:459.10px;font-size:17.5px;color:#757980;font-weight:400;letter-spacing:-0.100px;">Piece</span>
<span class="t" style="left:1712.50px;top:458.10px;font-size:17.5px;color:#0b0b0c;font-weight:700;letter-spacing:0.738px;">24.99</span>
<div class="a" style="left:1975.00px;top:455.50px;width:52.10px;height:24.50px;background:#e1f5e6;border-radius:7px;"></div>
<span class="t" style="left:1987.50px;top:460.10px;font-size:14.2px;color:#33b35a;font-weight:400;letter-spacing:1.214px;">235</span>
<div class="a" style="left:2222.50px;top:456.25px;width:35.50px;height:17.50px;background:#1668f6;border-radius:9px;"></div>
<div class="a" style="left:2243.60px;top:459.00px;width:12.00px;height:12.00px;background:#fff;border-radius:50%;"></div>
<svg class="a" style="left:2395px;top:444.80px;width:51px;height:44px" viewBox="0 0 51 44"><rect x="1.75" y="1.75" width="47.5" height="40.5" rx="10" fill="none" stroke="#3a6fd8" stroke-width="1.5"/></svg>
<svg class="a" style="left:2412.30px;top:457.70px;width:16.4px;height:16.4px;fill:#3a6fd8;" viewBox="0 0 16 16"><path d="M12.146.146a.5.5 0 0 1 .708 0l3 3a.5.5 0 0 1 0 .708l-10 10a.5.5 0 0 1-.168.11l-5 2a.5.5 0 0 1-.65-.65l2-5a.5.5 0 0 1 .11-.168l10-10zM11.207 2.5 13.5 4.793 14.793 3.5 12.5 1.207 11.207 2.5zm1.586 3L10.5 3.207 4 9.707V10h.5a.5.5 0 0 1 .5.5v.5h.5a.5.5 0 0 1 .5.5v.5h.293l6.5-6.5zm-9.761 5.175-.106.106-1.528 3.821 3.821-1.528.106-.106A.5.5 0 0 1 5 12.5V12h-.5a.5.5 0 0 1-.5-.5V11h-.5a.5.5 0 0 1-.468-.325z"/></svg>
<svg class="a" style="left:2454px;top:444.80px;width:51px;height:44px" viewBox="0 0 51 44"><rect x="1.75" y="1.75" width="47.5" height="40.5" rx="10" fill="none" stroke="#e25c5f" stroke-width="1.5"/></svg>
<svg class="a" style="left:2471.30px;top:457.70px;width:16.4px;height:16.4px;fill:#e25c5f;" viewBox="0 0 16 16"><path d="M5.5 5.5A.5.5 0 0 1 6 6v6a.5.5 0 0 1-1 0V6a.5.5 0 0 1 .5-.5Zm2.5 0a.5.5 0 0 1 .5.5v6a.5.5 0 0 1-1 0V6a.5.5 0 0 1 .5-.5Zm3 .5a.5.5 0 0 0-1 0v6a.5.5 0 0 0 1 0V6Z"/><path d="M14.5 3a1 1 0 0 1-1 1H13v9a2 2 0 0 1-2 2H5a2 2 0 0 1-2-2V4h-.5a1 1 0 0 1-1-1V2a1 1 0 0 1 1-1H6a1 1 0 0 1 1-1h2a1 1 0 0 1 1 1h3.5a1 1 0 0 1 1 1v1ZM4.118 4 4 4.059V13a1 1 0 0 0 1 1h6a1 1 0 0 0 1-1V4.059L11.882 4H4.118ZM2.5 3h11V2h-11v1Z"/></svg>
<div class="a" style="left:354.00px;top:511.00px;width:2175.00px;height:1.00px;background:#e8eaed;"></div>
<div class="a" style="left:374.40px;top:547.55px;width:22.10px;height:21.80px;background:#fff;border:1.5px solid #dcdde1;border-radius:5px;box-sizing:border-box;"></div>
<span class="t" style="left:447.00px;top:534.10px;font-size:16.2px;color:#1d1f24;font-weight:400;letter-spacing:1.163px;-webkit-text-stroke:0.3px #1d1f24;">Mechanical Keyboard</span>
<span class="t" style="left:447.00px;top:562.10px;font-size:16.4px;color:#757980;font-weight:400;letter-spacing:0.283px;">Electronics</span>
<span class="t" style="left:912.00px;top:550.10px;font-size:16px;color:#d4397f;font-weight:400;letter-spacing:-0.620px;font-family:'Liberation Mono', monospace;">STK-000002</span>
<span class="t" style="left:1147.50px;top:548.10px;font-size:17px;color:#757980;font-weight:400;letter-spacing:0.385px;">4901234567891</span>
<span class="t" style="left:1454.20px;top:548.10px;font-size:17.5px;color:#757980;font-weight:400;letter-spacing:-0.100px;">Piece</span>
<span class="t" style="left:1712.50px;top:548.10px;font-size:17.5px;color:#0b0b0c;font-weight:700;letter-spacing:0.738px;">69.99</span>
<div class="a" style="left:1975.00px;top:544.95px;width:43.40px;height:24.50px;background:#e1f5e6;border-radius:7px;"></div>
<span class="t" style="left:1987.50px;top:550.10px;font-size:14.2px;color:#33b35a;font-weight:400;letter-spacing:1.619px;">86</span>
<div class="a" style="left:2222.50px;top:545.70px;width:35.50px;height:17.50px;background:#1668f6;border-radius:9px;"></div>
<div class="a" style="left:2243.60px;top:548.45px;width:12.00px;height:12.00px;background:#fff;border-radius:50%;"></div>
<svg class="a" style="left:2395px;top:534.25px;width:51px;height:44px" viewBox="0 0 51 44"><rect x="1.75" y="1.75" width="47.5" height="40.5" rx="10" fill="none" stroke="#3a6fd8" stroke-width="1.5"/></svg>
<svg class="a" style="left:2412.30px;top:547.15px;width:16.4px;height:16.4px;fill:#3a6fd8;" viewBox="0 0 16 16"><path d="M12.146.146a.5.5 0 0 1 .708 0l3 3a.5.5 0 0 1 0 .708l-10 10a.5.5 0 0 1-.168.11l-5 2a.5.5 0 0 1-.65-.65l2-5a.5.5 0 0 1 .11-.168l10-10zM11.207 2.5 13.5 4.793 14.793 3.5 12.5 1.207 11.207 2.5zm1.586 3L10.5 3.207 4 9.707V10h.5a.5.5 0 0 1 .5.5v.5h.5a.5.5 0 0 1 .5.5v.5h.293l6.5-6.5zm-9.761 5.175-.106.106-1.528 3.821 3.821-1.528.106-.106A.5.5 0 0 1 5 12.5V12h-.5a.5.5 0 0 1-.5-.5V11h-.5a.5.5 0 0 1-.468-.325z"/></svg>
<svg class="a" style="left:2454px;top:534.25px;width:51px;height:44px" viewBox="0 0 51 44"><rect x="1.75" y="1.75" width="47.5" height="40.5" rx="10" fill="none" stroke="#e25c5f" stroke-width="1.5"/></svg>
<svg class="a" style="left:2471.30px;top:547.15px;width:16.4px;height:16.4px;fill:#e25c5f;" viewBox="0 0 16 16"><path d="M5.5 5.5A.5.5 0 0 1 6 6v6a.5.5 0 0 1-1 0V6a.5.5 0 0 1 .5-.5Zm2.5 0a.5.5 0 0 1 .5.5v6a.5.5 0 0 1-1 0V6a.5.5 0 0 1 .5-.5Zm3 .5a.5.5 0 0 0-1 0v6a.5.5 0 0 0 1 0V6Z"/><path d="M14.5 3a1 1 0 0 1-1 1H13v9a2 2 0 0 1-2 2H5a2 2 0 0 1-2-2V4h-.5a1 1 0 0 1-1-1V2a1 1 0 0 1 1-1H6a1 1 0 0 1 1-1h2a1 1 0 0 1 1 1h3.5a1 1 0 0 1 1 1v1ZM4.118 4 4 4.059V13a1 1 0 0 0 1 1h6a1 1 0 0 0 1-1V4.059L11.882 4H4.118ZM2.5 3h11V2h-11v1Z"/></svg>
<div class="a" style="left:354.00px;top:601.00px;width:2175.00px;height:1.00px;background:#e8eaed;"></div>
<div class="a" style="left:374.40px;top:637.00px;width:22.10px;height:21.80px;background:#fff;border:1.5px solid #dcdde1;border-radius:5px;box-sizing:border-box;"></div>
<span class="t" style="left:447.00px;top:624.10px;font-size:16.2px;color:#1d1f24;font-weight:400;letter-spacing:1.036px;-webkit-text-stroke:0.3px #1d1f24;">USB-C Hub 7-in-1</span>
<span class="t" style="left:447.00px;top:651.10px;font-size:16.4px;color:#757980;font-weight:400;letter-spacing:0.283px;">Electronics</span>
<span class="t" style="left:912.00px;top:640.10px;font-size:16px;color:#d4397f;font-weight:400;letter-spacing:-0.620px;font-family:'Liberation Mono', monospace;">STK-000003</span>
<span class="t" style="left:1147.50px;top:638.10px;font-size:17.5px;color:#757980;font-weight:400;letter-spacing:0.000px;">–</span>
<span class="t" style="left:1454.20px;top:638.10px;font-size:17.5px;color:#757980;font-weight:400;letter-spacing:-0.100px;">Piece</span>
<span class="t" style="left:1712.50px;top:637.10px;font-size:17.5px;color:#0b0b0c;font-weight:700;letter-spacing:0.738px;">39.99</span>
<div class="a" style="left:1975.00px;top:634.40px;width:43.40px;height:24.50px;background:#e1f5e6;border-radius:7px;"></div>
<span class="t" style="left:1987.50px;top:639.10px;font-size:14.2px;color:#33b35a;font-weight:400;letter-spacing:1.619px;">63</span>
<div class="a" style="left:2222.50px;top:635.15px;width:35.50px;height:17.50px;background:#1668f6;border-radius:9px;"></div>
<div class="a" style="left:2243.60px;top:637.90px;width:12.00px;height:12.00px;background:#fff;border-radius:50%;"></div>
<svg class="a" style="left:2395px;top:623.70px;width:51px;height:44px" viewBox="0 0 51 44"><rect x="1.75" y="1.75" width="47.5" height="40.5" rx="10" fill="none" stroke="#3a6fd8" stroke-width="1.5"/></svg>
<svg class="a" style="left:2412.30px;top:636.60px;width:16.4px;height:16.4px;fill:#3a6fd8;" viewBox="0 0 16 16"><path d="M12.146.146a.5.5 0 0 1 .708 0l3 3a.5.5 0 0 1 0 .708l-10 10a.5.5 0 0 1-.168.11l-5 2a.5.5 0 0 1-.65-.65l2-5a.5.5 0 0 1 .11-.168l10-10zM11.207 2.5 13.5 4.793 14.793 3.5 12.5 1.207 11.207 2.5zm1.586 3L10.5 3.207 4 9.707V10h.5a.5.5 0 0 1 .5.5v.5h.5a.5.5 0 0 1 .5.5v.5h.293l6.5-6.5zm-9.761 5.175-.106.106-1.528 3.821 3.821-1.528.106-.106A.5.5 0 0 1 5 12.5V12h-.5a.5.5 0 0 1-.5-.5V11h-.5a.5.5 0 0 1-.468-.325z"/></svg>
<svg class="a" style="left:2454px;top:623.70px;width:51px;height:44px" viewBox="0 0 51 44"><rect x="1.75" y="1.75" width="47.5" height="40.5" rx="10" fill="none" stroke="#e25c5f" stroke-width="1.5"/></svg>
<svg class="a" style="left:2471.30px;top:636.60px;width:16.4px;height:16.4px;fill:#e25c5f;" viewBox="0 0 16 16"><path d="M5.5 5.5A.5.5 0 0 1 6 6v6a.5.5 0 0 1-1 0V6a.5.5 0 0 1 .5-.5Zm2.5 0a.5.5 0 0 1 .5.5v6a.5.5 0 0 1-1 0V6a.5.5 0 0 1 .5-.5Zm3 .5a.5.5 0 0 0-1 0v6a.5.5 0 0 0 1 0V6Z"/><path d="M14.5 3a1 1 0 0 1-1 1H13v9a2 2 0 0 1-2 2H5a2 2 0 0 1-2-2V4h-.5a1 1 0 0 1-1-1V2a1 1 0 0 1 1-1H6a1 1 0 0 1 1-1h2a1 1 0 0 1 1 1h3.5a1 1 0 0 1 1 1v1ZM4.118 4 4 4.059V13a1 1 0 0 0 1 1h6a1 1 0 0 0 1-1V4.059L11.882 4H4.118ZM2.5 3h11V2h-11v1Z"/></svg>
<div class="a" style="left:354.00px;top:690.00px;width:2175.00px;height:1.00px;background:#e8eaed;"></div>
<div class="a" style="left:374.40px;top:726.45px;width:22.10px;height:21.80px;background:#fff;border:1.5px solid #dcdde1;border-radius:5px;box-sizing:border-box;"></div>
<span class="t" style="left:447.00px;top:713.10px;font-size:16.2px;color:#1d1f24;font-weight:400;letter-spacing:1.174px;-webkit-text-stroke:0.3px #1d1f24;">Webcam HD 1080p</span>
<span class="t" style="left:447.00px;top:741.10px;font-size:16.4px;color:#757980;font-weight:400;letter-spacing:0.283px;">Electronics</span>
<span class="t" style="left:912.00px;top:729.10px;font-size:16px;color:#d4397f;font-weight:400;letter-spacing:-0.620px;font-family:'Liberation Mono', monospace;">STK-000004</span>
<span class="t" style="left:1147.50px;top:727.10px;font-size:17px;color:#757980;font-weight:400;letter-spacing:0.802px;">4901234567893</span>
<span class="t" style="left:1454.20px;top:727.10px;font-size:17.5px;color:#757980;font-weight:400;letter-spacing:-0.100px;">Piece</span>
<span class="t" style="left:1712.50px;top:727.10px;font-size:17.5px;color:#0b0b0c;font-weight:700;letter-spacing:0.738px;">49.99</span>
<div class="a" style="left:1975.00px;top:723.85px;width:43.40px;height:24.50px;background:#e1f5e6;border-radius:7px;"></div>
<span class="t" style="left:1987.50px;top:729.10px;font-size:14.2px;color:#33b35a;font-weight:400;letter-spacing:1.619px;">73</span>
<div class="a" style="left:2222.50px;top:724.60px;width:35.50px;height:17.50px;background:#1668f6;border-radius:9px;"></div>
<div class="a" style="left:2243.60px;top:727.35px;width:12.00px;height:12.00px;background:#fff;border-radius:50%;"></div>
<svg class="a" style="left:2395px;top:713.15px;width:51px;height:44px" viewBox="0 0 51 44"><rect x="1.75" y="1.75" width="47.5" height="40.5" rx="10" fill="none" stroke="#3a6fd8" stroke-width="1.5"/></svg>
<svg class="a" style="left:2412.30px;top:726.05px;width:16.4px;height:16.4px;fill:#3a6fd8;" viewBox="0 0 16 16"><path d="M12.146.146a.5.5 0 0 1 .708 0l3 3a.5.5 0 0 1 0 .708l-10 10a.5.5 0 0 1-.168.11l-5 2a.5.5 0 0 1-.65-.65l2-5a.5.5 0 0 1 .11-.168l10-10zM11.207 2.5 13.5 4.793 14.793 3.5 12.5 1.207 11.207 2.5zm1.586 3L10.5 3.207 4 9.707V10h.5a.5.5 0 0 1 .5.5v.5h.5a.5.5 0 0 1 .5.5v.5h.293l6.5-6.5zm-9.761 5.175-.106.106-1.528 3.821 3.821-1.528.106-.106A.5.5 0 0 1 5 12.5V12h-.5a.5.5 0 0 1-.5-.5V11h-.5a.5.5 0 0 1-.468-.325z"/></svg>
<svg class="a" style="left:2454px;top:713.15px;width:51px;height:44px" viewBox="0 0 51 44"><rect x="1.75" y="1.75" width="47.5" height="40.5" rx="10" fill="none" stroke="#e25c5f" stroke-width="1.5"/></svg>
<svg class="a" style="left:2471.30px;top:726.05px;width:16.4px;height:16.4px;fill:#e25c5f;" viewBox="0 0 16 16"><path d="M5.5 5.5A.5.5 0 0 1 6 6v6a.5.5 0 0 1-1 0V6a.5.5 0 0 1 .5-.5Zm2.5 0a.5.5 0 0 1 .5.5v6a.5.5 0 0 1-1 0V6a.5.5 0 0 1 .5-.5Zm3 .5a.5.5 0 0 0-1 0v6a.5.5 0 0 0 1 0V6Z"/><path d="M14.5 3a1 1 0 0 1-1 1H13v9a2 2 0 0 1-2 2H5a2 2 0 0 1-2-2V4h-.5a1 1 0 0 1-1-1V2a1 1 0 0 1 1-1H6a1 1 0 0 1 1-1h2a1 1 0 0 1 1 1h3.5a1 1 0 0 1 1 1v1ZM4.118 4 4 4.059V13a1 1 0 0 0 1 1h6a1 1 0 0 0 1-1V4.059L11.882 4H4.118ZM2.5 3h11V2h-11v1Z"/></svg>
<div class="a" style="left:354.00px;top:780.00px;width:2175.00px;height:1.00px;background:#e8eaed;"></div>
<div class="a" style="left:374.40px;top:815.90px;width:22.10px;height:21.80px;background:#fff;border:1.5px solid #dcdde1;border-radius:5px;box-sizing:border-box;"></div>
<span class="t" style="left:447.00px;top:802.10px;font-size:16.2px;color:#1d1f24;font-weight:400;letter-spacing:1.069px;-webkit-text-stroke:0.3px #1d1f24;">Bluetooth Speaker</span>
<span class="t" style="left:447.00px;top:830.10px;font-size:16.4px;color:#757980;font-weight:400;letter-spacing:0.283px;">Electronics</span>
<span class="t" style="left:912.00px;top:819.10px;font-size:16px;color:#d4397f;font-weight:400;letter-spacing:-0.620px;font-family:'Liberation Mono', monospace;">STK-000005</span>
<span class="t" style="left:1147.50px;top:817.10px;font-size:17.5px;color:#757980;font-weight:400;letter-spacing:0.000px;">–</span>
<span class="t" style="left:1454.20px;top:817.10px;font-size:17.5px;color:#757980;font-weight:400;letter-spacing:-0.100px;">Piece</span>
<span class="t" style="left:1712.50px;top:816.10px;font-size:17.5px;color:#0b0b0c;font-weight:700;letter-spacing:0.738px;">34.99</span>
<div class="a" style="left:1975.00px;top:813.30px;width:43.40px;height:24.50px;background:#e1f5e6;border-radius:7px;"></div>
<span class="t" style="left:1987.50px;top:818.10px;font-size:14.2px;color:#33b35a;font-weight:400;letter-spacing:1.619px;">65</span>
<div class="a" style="left:2222.50px;top:814.05px;width:35.50px;height:17.50px;background:#1668f6;border-radius:9px;"></div>
<div class="a" style="left:2243.60px;top:816.80px;width:12.00px;height:12.00px;background:#fff;border-radius:50%;"></div>
<svg class="a" style="left:2395px;top:802.60px;width:51px;height:44px" viewBox="0 0 51 44"><rect x="1.75" y="1.75" width="47.5" height="40.5" rx="10" fill="none" stroke="#3a6fd8" stroke-width="1.5"/></svg>
<svg class="a" style="left:2412.30px;top:815.50px;width:16.4px;height:16.4px;fill:#3a6fd8;" viewBox="0 0 16 16"><path d="M12.146.146a.5.5 0 0 1 .708 0l3 3a.5.5 0 0 1 0 .708l-10 10a.5.5 0 0 1-.168.11l-5 2a.5.5 0 0 1-.65-.65l2-5a.5.5 0 0 1 .11-.168l10-10zM11.207 2.5 13.5 4.793 14.793 3.5 12.5 1.207 11.207 2.5zm1.586 3L10.5 3.207 4 9.707V10h.5a.5.5 0 0 1 .5.5v.5h.5a.5.5 0 0 1 .5.5v.5h.293l6.5-6.5zm-9.761 5.175-.106.106-1.528 3.821 3.821-1.528.106-.106A.5.5 0 0 1 5 12.5V12h-.5a.5.5 0 0 1-.5-.5V11h-.5a.5.5 0 0 1-.468-.325z"/></svg>
<svg class="a" style="left:2454px;top:802.60px;width:51px;height:44px" viewBox="0 0 51 44"><rect x="1.75" y="1.75" width="47.5" height="40.5" rx="10" fill="none" stroke="#e25c5f" stroke-width="1.5"/></svg>
<svg class="a" style="left:2471.30px;top:815.50px;width:16.4px;height:16.4px;fill:#e25c5f;" viewBox="0 0 16 16"><path d="M5.5 5.5A.5.5 0 0 1 6 6v6a.5.5 0 0 1-1 0V6a.5.5 0 0 1 .5-.5Zm2.5 0a.5.5 0 0 1 .5.5v6a.5.5 0 0 1-1 0V6a.5.5 0 0 1 .5-.5Zm3 .5a.5.5 0 0 0-1 0v6a.5.5 0 0 0 1 0V6Z"/><path d="M14.5 3a1 1 0 0 1-1 1H13v9a2 2 0 0 1-2 2H5a2 2 0 0 1-2-2V4h-.5a1 1 0 0 1-1-1V2a1 1 0 0 1 1-1H6a1 1 0 0 1 1-1h2a1 1 0 0 1 1 1h3.5a1 1 0 0 1 1 1v1ZM4.118 4 4 4.059V13a1 1 0 0 0 1 1h6a1 1 0 0 0 1-1V4.059L11.882 4H4.118ZM2.5 3h11V2h-11v1Z"/></svg>
<div class="a" style="left:354.00px;top:869.00px;width:2175.00px;height:1.00px;background:#e8eaed;"></div>
<div class="a" style="left:374.40px;top:905.35px;width:22.10px;height:21.80px;background:#fff;border:1.5px solid #dcdde1;border-radius:5px;box-sizing:border-box;"></div>
<span class="t" style="left:447.00px;top:892.10px;font-size:16.2px;color:#1d1f24;font-weight:400;letter-spacing:0.996px;-webkit-text-stroke:0.3px #1d1f24;">USB-C Cable 2m</span>
<span class="t" style="left:447.00px;top:920.10px;font-size:16.4px;color:#757980;font-weight:400;letter-spacing:0.234px;">Accessories</span>
<span class="t" style="left:912.00px;top:908.10px;font-size:16px;color:#d4397f;font-weight:400;letter-spacing:-0.620px;font-family:'Liberation Mono', monospace;">STK-000006</span>
<span class="t" style="left:1147.50px;top:906.10px;font-size:17px;color:#757980;font-weight:400;letter-spacing:0.802px;">4901234567895</span>
<span class="t" style="left:1454.20px;top:906.10px;font-size:17.5px;color:#757980;font-weight:400;letter-spacing:-0.100px;">Piece</span>
<span class="t" style="left:1712.50px;top:906.10px;font-size:17.5px;color:#0b0b0c;font-weight:700;letter-spacing:0.713px;">9.99</span>
<div class="a" style="left:1975.00px;top:902.75px;width:52.90px;height:24.50px;background:#e1f5e6;border-radius:7px;"></div>
<span class="t" style="left:1987.50px;top:908.10px;font-size:14.2px;color:#33b35a;font-weight:400;letter-spacing:1.614px;">800</span>
<div class="a" style="left:2222.50px;top:903.50px;width:35.50px;height:17.50px;background:#1668f6;border-radius:9px;"></div>
<div class="a" style="left:2243.60px;top:906.25px;width:12.00px;height:12.00px;background:#fff;border-radius:50%;"></div>
<svg class="a" style="left:2395px;top:892.05px;width:51px;height:44px" viewBox="0 0 51 44"><rect x="1.75" y="1.75" width="47.5" height="40.5" rx="10" fill="none" stroke="#3a6fd8" stroke-width="1.5"/></svg>
<svg class="a" style="left:2412.30px;top:904.95px;width:16.4px;height:16.4px;fill:#3a6fd8;" viewBox="0 0 16 16"><path d="M12.146.146a.5.5 0 0 1 .708 0l3 3a.5.5 0 0 1 0 .708l-10 10a.5.5 0 0 1-.168.11l-5 2a.5.5 0 0 1-.65-.65l2-5a.5.5 0 0 1 .11-.168l10-10zM11.207 2.5 13.5 4.793 14.793 3.5 12.5 1.207 11.207 2.5zm1.586 3L10.5 3.207 4 9.707V10h.5a.5.5 0 0 1 .5.5v.5h.5a.5.5 0 0 1 .5.5v.5h.293l6.5-6.5zm-9.761 5.175-.106.106-1.528 3.821 3.821-1.528.106-.106A.5.5 0 0 1 5 12.5V12h-.5a.5.5 0 0 1-.5-.5V11h-.5a.5.5 0 0 1-.468-.325z"/></svg>
<svg class="a" style="left:2454px;top:892.05px;width:51px;height:44px" viewBox="0 0 51 44"><rect x="1.75" y="1.75" width="47.5" height="40.5" rx="10" fill="none" stroke="#e25c5f" stroke-width="1.5"/></svg>
<svg class="a" style="left:2471.30px;top:904.95px;width:16.4px;height:16.4px;fill:#e25c5f;" viewBox="0 0 16 16"><path d="M5.5 5.5A.5.5 0 0 1 6 6v6a.5.5 0 0 1-1 0V6a.5.5 0 0 1 .5-.5Zm2.5 0a.5.5 0 0 1 .5.5v6a.5.5 0 0 1-1 0V6a.5.5 0 0 1 .5-.5Zm3 .5a.5.5 0 0 0-1 0v6a.5.5 0 0 0 1 0V6Z"/><path d="M14.5 3a1 1 0 0 1-1 1H13v9a2 2 0 0 1-2 2H5a2 2 0 0 1-2-2V4h-.5a1 1 0 0 1-1-1V2a1 1 0 0 1 1-1H6a1 1 0 0 1 1-1h2a1 1 0 0 1 1 1h3.5a1 1 0 0 1 1 1v1ZM4.118 4 4 4.059V13a1 1 0 0 0 1 1h6a1 1 0 0 0 1-1V4.059L11.882 4H4.118ZM2.5 3h11V2h-11v1Z"/></svg>
<div class="a" style="left:354.00px;top:959.00px;width:2175.00px;height:1.00px;background:#e8eaed;"></div>
<div class="a" style="left:374.40px;top:994.80px;width:22.10px;height:21.80px;background:#fff;border:1.5px solid #dcdde1;border-radius:5px;box-sizing:border-box;"></div>
<span class="t" style="left:447.00px;top:981.10px;font-size:16.2px;color:#1d1f24;font-weight:400;letter-spacing:0.652px;-webkit-text-stroke:0.3px #1d1f24;">Laptop Sleeve 15&quot;</span>
<span class="t" style="left:447.00px;top:1009.10px;font-size:16.4px;color:#757980;font-weight:400;letter-spacing:0.234px;">Accessories</span>
<span class="t" style="left:912.00px;top:998.10px;font-size:16px;color:#d4397f;font-weight:400;letter-spacing:-0.620px;font-family:'Liberation Mono', monospace;">STK-000007</span>
<span class="t" style="left:1147.50px;top:996.10px;font-size:17.5px;color:#757980;font-weight:400;letter-spacing:0.000px;">–</span>
<span class="t" style="left:1454.20px;top:996.10px;font-size:17.5px;color:#757980;font-weight:400;letter-spacing:-0.100px;">Piece</span>
<span class="t" style="left:1712.50px;top:995.10px;font-size:17.5px;color:#0b0b0c;font-weight:700;letter-spacing:-0.112px;">19.99</span>
<div class="a" style="left:1975.00px;top:992.20px;width:43.40px;height:24.50px;background:#e1f5e6;border-radius:7px;"></div>
<span class="t" style="left:1987.50px;top:997.10px;font-size:14.2px;color:#33b35a;font-weight:400;letter-spacing:1.619px;">37</span>
<div class="a" style="left:2222.50px;top:992.95px;width:35.50px;height:17.50px;background:#1668f6;border-radius:9px;"></div>
<div class="a" style="left:2243.60px;top:995.70px;width:12.00px;height:12.00px;background:#fff;border-radius:50%;"></div>
<svg class="a" style="left:2395px;top:981.50px;width:51px;height:44px" viewBox="0 0 51 44"><rect x="1.75" y="1.75" width="47.5" height="40.5" rx="10" fill="none" stroke="#3a6fd8" stroke-width="1.5"/></svg>
<svg class="a" style="left:2412.30px;top:994.40px;width:16.4px;height:16.4px;fill:#3a6fd8;" viewBox="0 0 16 16"><path d="M12.146.146a.5.5 0 0 1 .708 0l3 3a.5.5 0 0 1 0 .708l-10 10a.5.5 0 0 1-.168.11l-5 2a.5.5 0 0 1-.65-.65l2-5a.5.5 0 0 1 .11-.168l10-10zM11.207 2.5 13.5 4.793 14.793 3.5 12.5 1.207 11.207 2.5zm1.586 3L10.5 3.207 4 9.707V10h.5a.5.5 0 0 1 .5.5v.5h.5a.5.5 0 0 1 .5.5v.5h.293l6.5-6.5zm-9.761 5.175-.106.106-1.528 3.821 3.821-1.528.106-.106A.5.5 0 0 1 5 12.5V12h-.5a.5.5 0 0 1-.5-.5V11h-.5a.5.5 0 0 1-.468-.325z"/></svg>
<svg class="a" style="left:2454px;top:981.50px;width:51px;height:44px" viewBox="0 0 51 44"><rect x="1.75" y="1.75" width="47.5" height="40.5" rx="10" fill="none" stroke="#e25c5f" stroke-width="1.5"/></svg>
<svg class="a" style="left:2471.30px;top:994.40px;width:16.4px;height:16.4px;fill:#e25c5f;" viewBox="0 0 16 16"><path d="M5.5 5.5A.5.5 0 0 1 6 6v6a.5.5 0 0 1-1 0V6a.5.5 0 0 1 .5-.5Zm2.5 0a.5.5 0 0 1 .5.5v6a.5.5 0 0 1-1 0V6a.5.5 0 0 1 .5-.5Zm3 .5a.5.5 0 0 0-1 0v6a.5.5 0 0 0 1 0V6Z"/><path d="M14.5 3a1 1 0 0 1-1 1H13v9a2 2 0 0 1-2 2H5a2 2 0 0 1-2-2V4h-.5a1 1 0 0 1-1-1V2a1 1 0 0 1 1-1H6a1 1 0 0 1 1-1h2a1 1 0 0 1 1 1h3.5a1 1 0 0 1 1 1v1ZM4.118 4 4 4.059V13a1 1 0 0 0 1 1h6a1 1 0 0 0 1-1V4.059L11.882 4H4.118ZM2.5 3h11V2h-11v1Z"/></svg>
<div class="a" style="left:354.00px;top:1048.00px;width:2175.00px;height:1.00px;background:#e8eaed;"></div>
<div class="a" style="left:374.40px;top:1084.25px;width:22.10px;height:21.80px;background:#fff;border:1.5px solid #dcdde1;border-radius:5px;box-sizing:border-box;"></div>
<span class="t" style="left:447.00px;top:1071.10px;font-size:16.2px;color:#1d1f24;font-weight:400;letter-spacing:0.692px;-webkit-text-stroke:0.3px #1d1f24;">Mouse Pad XL</span>
<span class="t" style="left:447.00px;top:1099.10px;font-size:16.4px;color:#757980;font-weight:400;letter-spacing:0.234px;">Accessories</span>
<span class="t" style="left:912.00px;top:1087.10px;font-size:16px;color:#d4397f;font-weight:400;letter-spacing:-0.620px;font-family:'Liberation Mono', monospace;">STK-000008</span>
<span class="t" style="left:1147.50px;top:1085.10px;font-size:17px;color:#757980;font-weight:400;letter-spacing:0.802px;">4901234567897</span>
<span class="t" style="left:1454.20px;top:1085.10px;font-size:17.5px;color:#757980;font-weight:400;letter-spacing:-0.100px;">Piece</span>
<span class="t" style="left:1712.50px;top:1085.10px;font-size:17.5px;color:#0b0b0c;font-weight:700;letter-spacing:-0.112px;">14.99</span>
<div class="a" style="left:1975.00px;top:1081.65px;width:49.00px;height:24.50px;background:#e1f5e6;border-radius:7px;"></div>
<span class="t" style="left:1987.50px;top:1087.10px;font-size:14.2px;color:#33b35a;font-weight:400;letter-spacing:-0.336px;">135</span>
<div class="a" style="left:2222.50px;top:1082.40px;width:35.50px;height:17.50px;background:#1668f6;border-radius:9px;"></div>
<div class="a" style="left:2243.60px;top:1085.15px;width:12.00px;height:12.00px;background:#fff;border-radius:50%;"></div>
<svg class="a" style="left:2395px;top:1070.95px;width:51px;height:44px" viewBox="0 0 51 44"><rect x="1.75" y="1.75" width="47.5" height="40.5" rx="10" fill="none" stroke="#3a6fd8" stroke-width="1.5"/></svg>
<svg class="a" style="left:2412.30px;top:1083.85px;width:16.4px;height:16.4px;fill:#3a6fd8;" viewBox="0 0 16 16"><path d="M12.146.146a.5.5 0 0 1 .708 0l3 3a.5.5 0 0 1 0 .708l-10 10a.5.5 0 0 1-.168.11l-5 2a.5.5 0 0 1-.65-.65l2-5a.5.5 0 0 1 .11-.168l10-10zM11.207 2.5 13.5 4.793 14.793 3.5 12.5 1.207 11.207 2.5zm1.586 3L10.5 3.207 4 9.707V10h.5a.5.5 0 0 1 .5.5v.5h.5a.5.5 0 0 1 .5.5v.5h.293l6.5-6.5zm-9.761 5.175-.106.106-1.528 3.821 3.821-1.528.106-.106A.5.5 0 0 1 5 12.5V12h-.5a.5.5 0 0 1-.5-.5V11h-.5a.5.5 0 0 1-.468-.325z"/></svg>
<svg class="a" style="left:2454px;top:1070.95px;width:51px;height:44px" viewBox="0 0 51 44"><rect x="1.75" y="1.75" width="47.5" height="40.5" rx="10" fill="none" stroke="#e25c5f" stroke-width="1.5"/></svg>
<svg class="a" style="left:2471.30px;top:1083.85px;width:16.4px;height:16.4px;fill:#e25c5f;" viewBox="0 0 16 16"><path d="M5.5 5.5A.5.5 0 0 1 6 6v6a.5.5 0 0 1-1 0V6a.5.5 0 0 1 .5-.5Zm2.5 0a.5.5 0 0 1 .5.5v6a.5.5 0 0 1-1 0V6a.5.5 0 0 1 .5-.5Zm3 .5a.5.5 0 0 0-1 0v6a.5.5 0 0 0 1 0V6Z"/><path d="M14.5 3a1 1 0 0 1-1 1H13v9a2 2 0 0 1-2 2H5a2 2 0 0 1-2-2V4h-.5a1 1 0 0 1-1-1V2a1 1 0 0 1 1-1H6a1 1 0 0 1 1-1h2a1 1 0 0 1 1 1h3.5a1 1 0 0 1 1 1v1ZM4.118 4 4 4.059V13a1 1 0 0 0 1 1h6a1 1 0 0 0 1-1V4.059L11.882 4H4.118ZM2.5 3h11V2h-11v1Z"/></svg>
<div class="a" style="left:354.00px;top:1138.00px;width:2175.00px;height:1.00px;background:#e8eaed;"></div>
<div class="a" style="left:374.40px;top:1173.70px;width:22.10px;height:21.80px;background:#fff;border:1.5px solid #dcdde1;border-radius:5px;box-sizing:border-box;"></div>
<span class="t" style="left:447.00px;top:1160.10px;font-size:16.2px;color:#1d1f24;font-weight:400;letter-spacing:1.141px;-webkit-text-stroke:0.3px #1d1f24;">A4 Paper Pack (500 sheets)</span>
<span class="t" style="left:447.00px;top:1188.10px;font-size:16.4px;color:#757980;font-weight:400;letter-spacing:0.203px;">Office Supplies</span>
<span class="t" style="left:912.00px;top:1177.10px;font-size:16px;color:#d4397f;font-weight:400;letter-spacing:-0.620px;font-family:'Liberation Mono', monospace;">STK-000009</span>
<span class="t" style="left:1147.50px;top:1174.10px;font-size:17px;color:#757980;font-weight:400;letter-spacing:0.802px;">4901234567898</span>
<span class="t" style="left:1454.20px;top:1174.10px;font-size:17.5px;color:#757980;font-weight:400;letter-spacing:-0.100px;">Pack</span>
<span class="t" style="left:1712.50px;top:1174.10px;font-size:17.5px;color:#0b0b0c;font-weight:700;letter-spacing:0.713px;">8.99</span>
<div class="a" style="left:1975.00px;top:1171.10px;width:43.40px;height:24.50px;background:#e1f5e6;border-radius:7px;"></div>
<span class="t" style="left:1987.50px;top:1176.10px;font-size:14.2px;color:#33b35a;font-weight:400;letter-spacing:1.619px;">22</span>
<div class="a" style="left:2222.50px;top:1171.85px;width:35.50px;height:17.50px;background:#1668f6;border-radius:9px;"></div>
<div class="a" style="left:2243.60px;top:1174.60px;width:12.00px;height:12.00px;background:#fff;border-radius:50%;"></div>
<svg class="a" style="left:2395px;top:1160.40px;width:51px;height:44px" viewBox="0 0 51 44"><rect x="1.75" y="1.75" width="47.5" height="40.5" rx="10" fill="none" stroke="#3a6fd8" stroke-width="1.5"/></svg>
<svg class="a" style="left:2412.30px;top:1173.30px;width:16.4px;height:16.4px;fill:#3a6fd8;" viewBox="0 0 16 16"><path d="M12.146.146a.5.5 0 0 1 .708 0l3 3a.5.5 0 0 1 0 .708l-10 10a.5.5 0 0 1-.168.11l-5 2a.5.5 0 0 1-.65-.65l2-5a.5.5 0 0 1 .11-.168l10-10zM11.207 2.5 13.5 4.793 14.793 3.5 12.5 1.207 11.207 2.5zm1.586 3L10.5 3.207 4 9.707V10h.5a.5.5 0 0 1 .5.5v.5h.5a.5.5 0 0 1 .5.5v.5h.293l6.5-6.5zm-9.761 5.175-.106.106-1.528 3.821 3.821-1.528.106-.106A.5.5 0 0 1 5 12.5V12h-.5a.5.5 0 0 1-.5-.5V11h-.5a.5.5 0 0 1-.468-.325z"/></svg>
<svg class="a" style="left:2454px;top:1160.40px;width:51px;height:44px" viewBox="0 0 51 44"><rect x="1.75" y="1.75" width="47.5" height="40.5" rx="10" fill="none" stroke="#e25c5f" stroke-width="1.5"/></svg>
<svg class="a" style="left:2471.30px;top:1173.30px;width:16.4px;height:16.4px;fill:#e25c5f;" viewBox="0 0 16 16"><path d="M5.5 5.5A.5.5 0 0 1 6 6v6a.5.5 0 0 1-1 0V6a.5.5 0 0 1 .5-.5Zm2.5 0a.5.5 0 0 1 .5.5v6a.5.5 0 0 1-1 0V6a.5.5 0 0 1 .5-.5Zm3 .5a.5.5 0 0 0-1 0v6a.5.5 0 0 0 1 0V6Z"/><path d="M14.5 3a1 1 0 0 1-1 1H13v9a2 2 0 0 1-2 2H5a2 2 0 0 1-2-2V4h-.5a1 1 0 0 1-1-1V2a1 1 0 0 1 1-1H6a1 1 0 0 1 1-1h2a1 1 0 0 1 1 1h3.5a1 1 0 0 1 1 1v1ZM4.118 4 4 4.059V13a1 1 0 0 0 1 1h6a1 1 0 0 0 1-1V4.059L11.882 4H4.118ZM2.5 3h11V2h-11v1Z"/></svg>
<div class="a" style="left:354.00px;top:1227.00px;width:2175.00px;height:1.00px;background:#e8eaed;"></div>
<div class="a" style="left:374.40px;top:1263.15px;width:22.10px;height:21.80px;background:#fff;border:1.5px solid #dcdde1;border-radius:5px;box-sizing:border-box;"></div>
<span class="t" style="left:447.00px;top:1250.10px;font-size:16.2px;color:#1d1f24;font-weight:400;letter-spacing:0.769px;-webkit-text-stroke:0.3px #1d1f24;">Ballpoint Pen Box (12 pcs)</span>
<span class="t" style="left:447.00px;top:1278.10px;font-size:16.4px;color:#757980;font-weight:400;letter-spacing:0.203px;">Office Supplies</span>
<span class="t" style="left:912.00px;top:1266.10px;font-size:16px;color:#d4397f;font-weight:400;letter-spacing:-0.620px;font-family:'Liberation Mono', monospace;">STK-000010</span>
<span class="t" style="left:1147.50px;top:1264.10px;font-size:17.5px;color:#757980;font-weight:400;letter-spacing:0.000px;">–</span>
<span class="t" style="left:1454.20px;top:1264.10px;font-size:17.5px;color:#757980;font-weight:400;letter-spacing:-0.100px;">Box</span>
<span class="t" style="left:1712.50px;top:1264.10px;font-size:17.5px;color:#0b0b0c;font-weight:700;letter-spacing:0.713px;">5.99</span>
<div class="a" style="left:1975.00px;top:1260.55px;width:49.40px;height:24.50px;background:#e1f5e6;border-radius:7px;"></div>
<span class="t" style="left:1987.50px;top:1266.10px;font-size:14.2px;color:#33b35a;font-weight:400;letter-spacing:-0.136px;">190</span>
<div class="a" style="left:2222.50px;top:1261.30px;width:35.50px;height:17.50px;background:#1668f6;border-radius:9px;"></div>
<div class="a" style="left:2243.60px;top:1264.05px;width:12.00px;height:12.00px;background:#fff;border-radius:50%;"></div>
<svg class="a" style="left:2395px;top:1249.85px;width:51px;height:44px" viewBox="0 0 51 44"><rect x="1.75" y="1.75" width="47.5" height="40.5" rx="10" fill="none" stroke="#3a6fd8" stroke-width="1.5"/></svg>
<svg class="a" style="left:2412.30px;top:1262.75px;width:16.4px;height:16.4px;fill:#3a6fd8;" viewBox="0 0 16 16"><path d="M12.146.146a.5.5 0 0 1 .708 0l3 3a.5.5 0 0 1 0 .708l-10 10a.5.5 0 0 1-.168.11l-5 2a.5.5 0 0 1-.65-.65l2-5a.5.5 0 0 1 .11-.168l10-10zM11.207 2.5 13.5 4.793 14.793 3.5 12.5 1.207 11.207 2.5zm1.586 3L10.5 3.207 4 9.707V10h.5a.5.5 0 0 1 .5.5v.5h.5a.5.5 0 0 1 .5.5v.5h.293l6.5-6.5zm-9.761 5.175-.106.106-1.528 3.821 3.821-1.528.106-.106A.5.5 0 0 1 5 12.5V12h-.5a.5.5 0 0 1-.5-.5V11h-.5a.5.5 0 0 1-.468-.325z"/></svg>
<svg class="a" style="left:2454px;top:1249.85px;width:51px;height:44px" viewBox="0 0 51 44"><rect x="1.75" y="1.75" width="47.5" height="40.5" rx="10" fill="none" stroke="#e25c5f" stroke-width="1.5"/></svg>
<svg class="a" style="left:2471.30px;top:1262.75px;width:16.4px;height:16.4px;fill:#e25c5f;" viewBox="0 0 16 16"><path d="M5.5 5.5A.5.5 0 0 1 6 6v6a.5.5 0 0 1-1 0V6a.5.5 0 0 1 .5-.5Zm2.5 0a.5.5 0 0 1 .5.5v6a.5.5 0 0 1-1 0V6a.5.5 0 0 1 .5-.5Zm3 .5a.5.5 0 0 0-1 0v6a.5.5 0 0 0 1 0V6Z"/><path d="M14.5 3a1 1 0 0 1-1 1H13v9a2 2 0 0 1-2 2H5a2 2 0 0 1-2-2V4h-.5a1 1 0 0 1-1-1V2a1 1 0 0 1 1-1H6a1 1 0 0 1 1-1h2a1 1 0 0 1 1 1h3.5a1 1 0 0 1 1 1v1ZM4.118 4 4 4.059V13a1 1 0 0 0 1 1h6a1 1 0 0 0 1-1V4.059L11.882 4H4.118ZM2.5 3h11V2h-11v1Z"/></svg>
<div class="a" style="left:354.00px;top:1316.00px;width:2175.00px;height:1.00px;background:#e8eaed;"></div>
<div class="a" style="left:374.40px;top:1352.60px;width:22.10px;height:21.80px;background:#fff;border:1.5px solid #dcdde1;border-radius:5px;box-sizing:border-box;"></div>
<span class="t" style="left:447.00px;top:1339.10px;font-size:16.2px;color:#1d1f24;font-weight:400;letter-spacing:0.997px;-webkit-text-stroke:0.3px #1d1f24;">Sticky Notes Pack</span>
<span class="t" style="left:447.00px;top:1367.10px;font-size:16.4px;color:#757980;font-weight:400;letter-spacing:0.203px;">Office Supplies</span>
<span class="t" style="left:912.00px;top:1356.10px;font-size:16px;color:#d4397f;font-weight:400;letter-spacing:-0.620px;font-family:'Liberation Mono', monospace;">STK-000011</span>
<span class="t" style="left:1147.50px;top:1353.10px;font-size:17px;color:#757980;font-weight:400;letter-spacing:0.802px;">4901234567900</span>
<span class="t" style="left:1454.20px;top:1353.10px;font-size:17.5px;color:#757980;font-weight:400;letter-spacing:-0.100px;">Pack</span>
<span class="t" style="left:1712.50px;top:1353.10px;font-size:17.5px;color:#0b0b0c;font-weight:700;letter-spacing:0.713px;">4.99</span>
<div class="a" style="left:1975.00px;top:1350.00px;width:52.50px;height:24.50px;background:#e1f5e6;border-radius:7px;"></div>
<span class="t" style="left:1987.50px;top:1355.10px;font-size:14.2px;color:#33b35a;font-weight:400;letter-spacing:1.414px;">330</span>
<div class="a" style="left:2222.50px;top:1350.75px;width:35.50px;height:17.50px;background:#1668f6;border-radius:9px;"></div>
<div class="a" style="left:2243.60px;top:1353.50px;width:12.00px;height:12.00px;background:#fff;border-radius:50%;"></div>
<svg class="a" style="left:2395px;top:1339.30px;width:51px;height:44px" viewBox="0 0 51 44"><rect x="1.75" y="1.75" width="47.5" height="40.5" rx="10" fill="none" stroke="#3a6fd8" stroke-width="1.5"/></svg>
<svg class="a" style="left:2412.30px;top:1352.20px;width:16.4px;height:16.4px;fill:#3a6fd8;" viewBox="0 0 16 16"><path d="M12.146.146a.5.5 0 0 1 .708 0l3 3a.5.5 0 0 1 0 .708l-10 10a.5.5 0 0 1-.168.11l-5 2a.5.5 0 0 1-.65-.65l2-5a.5.5 0 0 1 .11-.168l10-10zM11.207 2.5 13.5 4.793 14.793 3.5 12.5 1.207 11.207 2.5zm1.586 3L10.5 3.207 4 9.707V10h.5a.5.5 0 0 1 .5.5v.5h.5a.5.5 0 0 1 .5.5v.5h.293l6.5-6.5zm-9.761 5.175-.106.106-1.528 3.821 3.821-1.528.106-.106A.5.5 0 0 1 5 12.5V12h-.5a.5.5 0 0 1-.5-.5V11h-.5a.5.5 0 0 1-.468-.325z"/></svg>
<svg class="a" style="left:2454px;top:1339.30px;width:51px;height:44px" viewBox="0 0 51 44"><rect x="1.75" y="1.75" width="47.5" height="40.5" rx="10" fill="none" stroke="#e25c5f" stroke-width="1.5"/></svg>
<svg class="a" style="left:2471.30px;top:1352.20px;width:16.4px;height:16.4px;fill:#e25c5f;" viewBox="0 0 16 16"><path d="M5.5 5.5A.5.5 0 0 1 6 6v6a.5.5 0 0 1-1 0V6a.5.5 0 0 1 .5-.5Zm2.5 0a.5.5 0 0 1 .5.5v6a.5.5 0 0 1-1 0V6a.5.5 0 0 1 .5-.5Zm3 .5a.5.5 0 0 0-1 0v6a.5.5 0 0 0 1 0V6Z"/><path d="M14.5 3a1 1 0 0 1-1 1H13v9a2 2 0 0 1-2 2H5a2 2 0 0 1-2-2V4h-.5a1 1 0 0 1-1-1V2a1 1 0 0 1 1-1H6a1 1 0 0 1 1-1h2a1 1 0 0 1 1 1h3.5a1 1 0 0 1 1 1v1ZM4.118 4 4 4.059V13a1 1 0 0 0 1 1h6a1 1 0 0 0 1-1V4.059L11.882 4H4.118ZM2.5 3h11V2h-11v1Z"/></svg>
<div class="a" style="left:354.00px;top:1406.00px;width:2175.00px;height:1.00px;background:#e8eaed;"></div>
<div class="a" style="left:374.40px;top:1442.05px;width:22.10px;height:21.80px;background:#fff;border:1.5px solid #dcdde1;border-radius:5px;box-sizing:border-box;"></div>
<span class="t" style="left:447.00px;top:1429.10px;font-size:16.2px;color:#1d1f24;font-weight:400;letter-spacing:1.348px;-webkit-text-stroke:0.3px #1d1f24;">Mineral Water 500ml</span>
<span class="t" style="left:447.00px;top:1456.10px;font-size:16.4px;color:#757980;font-weight:400;letter-spacing:-0.071px;">Food &amp; Beverages</span>
<span class="t" style="left:912.00px;top:1445.10px;font-size:16px;color:#d4397f;font-weight:400;letter-spacing:-0.620px;font-family:'Liberation Mono', monospace;">STK-000012</span>
<span class="t" style="left:1147.50px;top:1443.10px;font-size:17px;color:#757980;font-weight:400;letter-spacing:0.385px;">4901234567901</span>
<span class="t" style="left:1454.20px;top:1443.10px;font-size:17.5px;color:#757980;font-weight:400;letter-spacing:-0.100px;">Piece</span>
<span class="t" style="left:1712.50px;top:1442.10px;font-size:17.5px;color:#0b0b0c;font-weight:700;letter-spacing:-0.421px;">1.50</span>
<div class="a" style="left:1975.00px;top:1439.45px;width:52.90px;height:24.50px;background:#e1f5e6;border-radius:7px;"></div>
<span class="t" style="left:1987.50px;top:1444.10px;font-size:14.2px;color:#33b35a;font-weight:400;letter-spacing:1.614px;">460</span>
<div class="a" style="left:2222.50px;top:1440.20px;width:35.50px;height:17.50px;background:#1668f6;border-radius:9px;"></div>
<div class="a" style="left:2243.60px;top:1442.95px;width:12.00px;height:12.00px;background:#fff;border-radius:50%;"></div>
<svg class="a" style="left:2395px;top:1428.75px;width:51px;height:44px" viewBox="0 0 51 44"><rect x="1.75" y="1.75" width="47.5" height="40.5" rx="10" fill="none" stroke="#3a6fd8" stroke-width="1.5"/></svg>
<svg class="a" style="left:2412.30px;top:1441.65px;width:16.4px;height:16.4px;fill:#3a6fd8;" viewBox="0 0 16 16"><path d="M12.146.146a.5.5 0 0 1 .708 0l3 3a.5.5 0 0 1 0 .708l-10 10a.5.5 0 0 1-.168.11l-5 2a.5.5 0 0 1-.65-.65l2-5a.5.5 0 0 1 .11-.168l10-10zM11.207 2.5 13.5 4.793 14.793 3.5 12.5 1.207 11.207 2.5zm1.586 3L10.5 3.207 4 9.707V10h.5a.5.5 0 0 1 .5.5v.5h.5a.5.5 0 0 1 .5.5v.5h.293l6.5-6.5zm-9.761 5.175-.106.106-1.528 3.821 3.821-1.528.106-.106A.5.5 0 0 1 5 12.5V12h-.5a.5.5 0 0 1-.5-.5V11h-.5a.5.5 0 0 1-.468-.325z"/></svg>
<svg class="a" style="left:2454px;top:1428.75px;width:51px;height:44px" viewBox="0 0 51 44"><rect x="1.75" y="1.75" width="47.5" height="40.5" rx="10" fill="none" stroke="#e25c5f" stroke-width="1.5"/></svg>
<svg class="a" style="left:2471.30px;top:1441.65px;width:16.4px;height:16.4px;fill:#e25c5f;" viewBox="0 0 16 16"><path d="M5.5 5.5A.5.5 0 0 1 6 6v6a.5.5 0 0 1-1 0V6a.5.5 0 0 1 .5-.5Zm2.5 0a.5.5 0 0 1 .5.5v6a.5.5 0 0 1-1 0V6a.5.5 0 0 1 .5-.5Zm3 .5a.5.5 0 0 0-1 0v6a.5.5 0 0 0 1 0V6Z"/><path d="M14.5 3a1 1 0 0 1-1 1H13v9a2 2 0 0 1-2 2H5a2 2 0 0 1-2-2V4h-.5a1 1 0 0 1-1-1V2a1 1 0 0 1 1-1H6a1 1 0 0 1 1-1h2a1 1 0 0 1 1 1h3.5a1 1 0 0 1 1 1v1ZM4.118 4 4 4.059V13a1 1 0 0 0 1 1h6a1 1 0 0 0 1-1V4.059L11.882 4H4.118ZM2.5 3h11V2h-11v1Z"/></svg>
<div class="a" style="left:354.00px;top:1495.00px;width:2175.00px;height:1.00px;background:#e8eaed;"></div>
</div></body></html>
